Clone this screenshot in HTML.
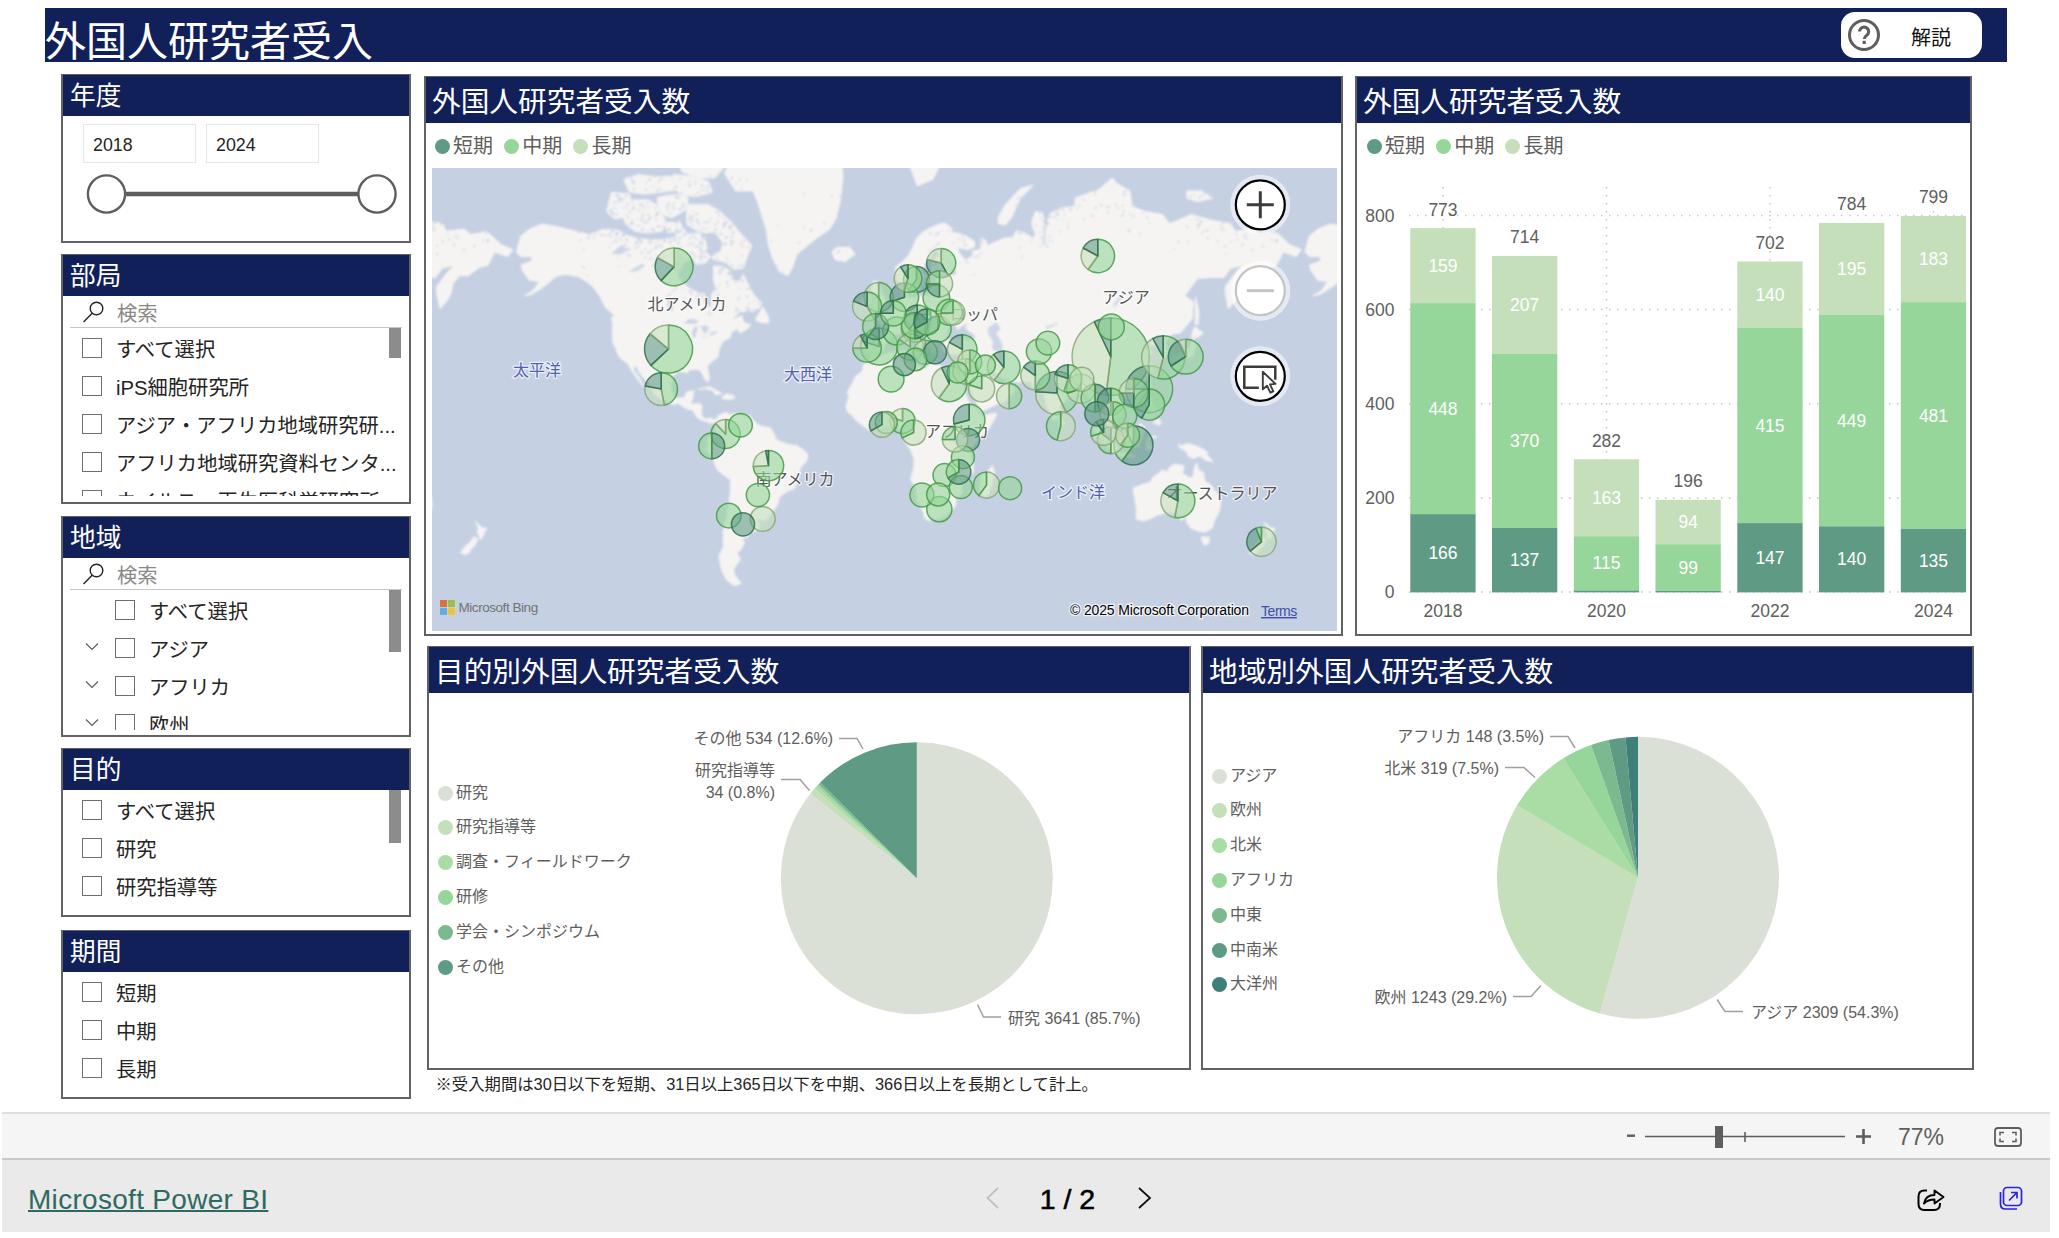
<!DOCTYPE html><html lang="ja"><head><meta charset="utf-8"><title>外国人研究者受入</title>
<style>
html,body{margin:0;padding:0;background:#fff}
body{width:2059px;height:1238px;position:relative;overflow:hidden;font-family:"Liberation Sans","Noto Sans CJK JP",sans-serif;color:#252423}
.abs{position:absolute}
.panel{position:absolute;box-sizing:border-box;border:1px solid #626262;background:#fff;box-shadow:inset 0 0 0 1px #626262}
.hd{position:absolute;left:1px;right:1px;top:0;background:#12205a;color:#fff;white-space:nowrap;overflow:hidden}
.hd span{position:absolute;left:9px}
.cb{position:absolute;width:20px;height:20px;margin-left:-1px;box-sizing:border-box;border:1px solid #6e6e6e;background:#fff}
.it{position:absolute;font-size:20.3px;line-height:28px;white-space:nowrap;color:#252423}
.lg{position:absolute;white-space:nowrap;color:#605e5c}
.dot{position:absolute;border-radius:50%}
svg text{font-family:"Liberation Sans","Noto Sans CJK JP",sans-serif}
</style></head><body>
<div class="abs" style="left:45px;top:8px;width:1962px;height:54px;background:#12205a"></div>
<div class="abs" style="left:45px;top:15px;font-size:41px;line-height:54px;color:#fff;white-space:nowrap">外国人研究者受入</div>
<div class="abs" style="left:1841px;top:12px;width:141px;height:46px;border-radius:14px;background:#fff"></div>
<svg class="abs" style="left:1847px;top:18px" width="34" height="34" viewBox="0 0 34 34"><circle cx="17" cy="17" r="14.5" fill="none" stroke="#605e5c" stroke-width="3"/><path d="M12.6 13.6a4.5 4.5 0 1 1 6.9 3.8c-1.6 1.1-2.3 1.8-2.3 3.6" fill="none" stroke="#605e5c" stroke-width="3"/><rect x="15.6" y="22.8" width="3.2" height="3.2" fill="#605e5c"/></svg>
<div class="abs" style="left:1911px;top:23.5px;font-size:20px;line-height:28px;color:#111;white-space:nowrap">解説</div>
<div class="panel" style="left:61px;top:74px;width:350px;height:169px">
<div class="hd" style="height:41px"><span style="font-size:25.7px;line-height:41px;top:1px;left:7px">年度</span></div>
<div class="abs" style="left:0;top:-1px;width:100%;height:100%"><div class="abs" style="left:21px;top:50px;width:113px;height:39px;box-sizing:border-box;border:1.5px solid #e6e6e6"></div><div class="abs" style="left:144px;top:50px;width:113px;height:39px;box-sizing:border-box;border:1.5px solid #e6e6e6"></div><div class="abs" style="left:31px;top:59px;font-size:17.8px;line-height:24px;color:#252423">2018</div><div class="abs" style="left:154px;top:59px;font-size:17.8px;line-height:24px;color:#252423">2024</div><svg class="abs" style="left:0;top:95px" width="348" height="50"><path d="M44 25H315" stroke="#605e5c" stroke-width="4.5"/><circle cx="44.5" cy="25" r="18.6" fill="#fff" stroke="#605e5c" stroke-width="2.4"/><circle cx="315" cy="25" r="18.6" fill="#fff" stroke="#605e5c" stroke-width="2.4"/></svg></div>
</div>
<div class="panel" style="left:61px;top:254px;width:350px;height:250px">
<div class="hd" style="height:41px"><span style="font-size:25.7px;line-height:41px;top:1px;left:7px">部局</span></div>
<div class="abs" style="left:0;top:-1px;width:100%;height:100%"><svg class="abs" style="left:20px;top:46px" width="24" height="24" viewBox="0 0 24 24"><circle cx="14.5" cy="8.5" r="6.3" fill="none" stroke="#252423" stroke-width="1.4"/><path d="M10.2 13.2L1.5 22" stroke="#252423" stroke-width="1.4" fill="none"/></svg><div class="abs" style="left:55px;top:45.5px;font-size:20.3px;line-height:28px;color:#8a8886;white-space:nowrap">検索</div><div class="abs" style="left:8px;top:73px;width:332px;height:1px;background:#c8c6c4"></div><div class="abs" style="left:0;top:73px;width:348px;height:169px;overflow:hidden"><div class="cb" style="left:21px;top:11px"></div><div class="it" style="left:54px;top:9.0px">すべて選択</div><div class="cb" style="left:21px;top:49px"></div><div class="it" style="left:54px;top:47.0px">iPS細胞研究所</div><div class="cb" style="left:21px;top:87px"></div><div class="it" style="left:54px;top:85.0px">アジア・アフリカ地域研究研...</div><div class="cb" style="left:21px;top:125px"></div><div class="it" style="left:54px;top:123.0px">アフリカ地域研究資料センタ...</div><div class="cb" style="left:21px;top:163px"></div><div class="it" style="left:54px;top:161.0px">ウイルス・再生医科学研究所</div></div><div class="abs" style="left:327px;top:74px;width:12px;height:30px;background:#8c8c8c"></div></div>
</div>
<div class="panel" style="left:61px;top:516px;width:350px;height:221px">
<div class="hd" style="height:41px"><span style="font-size:25.7px;line-height:41px;top:1px;left:7px">地域</span></div>
<div class="abs" style="left:0;top:-1px;width:100%;height:100%"><svg class="abs" style="left:20px;top:46px" width="24" height="24" viewBox="0 0 24 24"><circle cx="14.5" cy="8.5" r="6.3" fill="none" stroke="#252423" stroke-width="1.4"/><path d="M10.2 13.2L1.5 22" stroke="#252423" stroke-width="1.4" fill="none"/></svg><div class="abs" style="left:55px;top:45.5px;font-size:20.3px;line-height:28px;color:#8a8886;white-space:nowrap">検索</div><div class="abs" style="left:8px;top:73px;width:332px;height:1px;background:#c8c6c4"></div><div class="abs" style="left:0;top:73px;width:348px;height:141px;overflow:hidden"><div class="cb" style="left:54px;top:11px"></div><div class="it" style="left:87px;top:9.0px">すべて選択</div><div class="cb" style="left:54px;top:49px"></div><div class="it" style="left:87px;top:47.0px">アジア</div><svg class="abs" style="left:23px;top:53px" width="14" height="9" viewBox="0 0 14 9"><path d="M1 1.5L7 7.5L13 1.5" fill="none" stroke="#605e5c" stroke-width="1.2"/></svg><div class="cb" style="left:54px;top:87px"></div><div class="it" style="left:87px;top:85.0px">アフリカ</div><svg class="abs" style="left:23px;top:91px" width="14" height="9" viewBox="0 0 14 9"><path d="M1 1.5L7 7.5L13 1.5" fill="none" stroke="#605e5c" stroke-width="1.2"/></svg><div class="cb" style="left:54px;top:125px"></div><div class="it" style="left:87px;top:123.0px">欧州</div><svg class="abs" style="left:23px;top:129px" width="14" height="9" viewBox="0 0 14 9"><path d="M1 1.5L7 7.5L13 1.5" fill="none" stroke="#605e5c" stroke-width="1.2"/></svg></div><div class="abs" style="left:327px;top:74px;width:12px;height:62px;background:#8c8c8c"></div></div>
</div>
<div class="panel" style="left:61px;top:748px;width:350px;height:169px">
<div class="hd" style="height:41px"><span style="font-size:25.7px;line-height:41px;top:1px;left:7px">目的</span></div>
<div class="abs" style="left:0;top:-1px;width:100%;height:100%"><div class="cb" style="left:21px;top:52px"></div><div class="it" style="left:54px;top:50.0px">すべて選択</div><div class="cb" style="left:21px;top:90px"></div><div class="it" style="left:54px;top:88.0px">研究</div><div class="cb" style="left:21px;top:128px"></div><div class="it" style="left:54px;top:126.0px">研究指導等</div><div class="abs" style="left:327px;top:42px;width:12px;height:53px;background:#8c8c8c"></div></div>
</div>
<div class="panel" style="left:61px;top:930px;width:350px;height:169px">
<div class="hd" style="height:41px"><span style="font-size:25.7px;line-height:41px;top:1px;left:7px">期間</span></div>
<div class="abs" style="left:0;top:-1px;width:100%;height:100%"><div class="cb" style="left:21px;top:52px"></div><div class="it" style="left:54px;top:50.0px">短期</div><div class="cb" style="left:21px;top:90px"></div><div class="it" style="left:54px;top:88.0px">中期</div><div class="cb" style="left:21px;top:128px"></div><div class="it" style="left:54px;top:126.0px">長期</div></div>
</div>
<div class="panel" style="left:424px;top:76px;width:919px;height:560px">
<div class="hd" style="height:46px"><span style="font-size:28.7px;line-height:46px;top:2px;left:6px">外国人研究者受入数</span></div>
<div class="dot" style="left:9.5px;top:62px;width:15px;height:15px;background:#5f9b84"></div><div class="lg" style="left:28.0px;top:55px;font-size:20px;line-height:28px">短期</div><div class="dot" style="left:78.8px;top:62px;width:15px;height:15px;background:#96d69a"></div><div class="lg" style="left:97.3px;top:55px;font-size:20px;line-height:28px">中期</div><div class="dot" style="left:148.1px;top:62px;width:15px;height:15px;background:#c4dfba"></div><div class="lg" style="left:166.6px;top:55px;font-size:20px;line-height:28px">長期</div><svg class="abs" style="left:7px;top:91px" width="905" height="463" viewBox="0 0 905 463"><filter id="soft" x="-5%" y="-5%" width="110%" height="110%"><feGaussianBlur stdDeviation="0.9"/></filter><rect width="905" height="463" fill="#c5d0e3"/><g filter="url(#soft)"><rect x="-20" y="-20" width="945" height="503" fill="#c5d0e3"/><path d="M-355.7 183.7L-356.8 178.9L-355.3 170.9L-356.4 166.5L-353.5 164.4L-343.7 165.0L-339.3 165.3L-338.6 157.3L-341.5 153.1L-346.3 149.9L-339.3 148.5L-339.9 145.2L-335.6 145.9L-332.5 141.8L-328.3 139.3L-326.1 133.6L-320.7 131.8L-316.7 129.9L-318.0 120.8L-317.4 119.0L-313.0 116.4L-313.4 121.9L-314.8 126.2L-311.9 129.9L-305.3 129.9L-295.5 127.3L-292.6 128.4L-290.0 124.4L-290.0 119.0L-286.7 116.4L-283.4 118.3L-282.3 114.2L-284.5 110.7L-274.7 109.5L-270.3 107.6L-273.6 105.6L-281.2 106.8L-286.7 107.6L-289.3 103.6L-288.9 95.2L-281.2 86.3L-283.4 82.6L-287.8 84.0L-290.0 90.8L-296.6 97.3L-298.8 103.6L-295.5 107.6L-299.9 119.0L-301.0 121.9L-304.7 124.4L-308.0 124.4L-311.5 113.4L-313.0 109.5L-318.5 115.3L-324.0 112.3L-325.0 103.6L-325.0 99.4L-317.4 93.0L-311.9 87.2L-307.5 79.2L-304.2 70.7L-297.7 63.9L-290.0 60.0L-279.7 55.5L-274.7 55.5L-268.1 61.1L-270.3 63.9L-263.7 65.0L-257.1 66.6L-246.2 73.3L-246.2 79.2L-252.8 81.6L-263.7 79.2L-260.4 86.3L-255.0 91.7L-248.4 88.6L-247.3 82.6L-239.6 81.6L-239.6 70.2L-235.2 71.8L-233.1 77.8L-217.7 70.7L-206.8 69.2L-204.6 62.8L-195.8 65.0L-187.1 70.2L-184.9 66.6L-189.3 55.5L-184.9 43.5L-178.3 44.7L-176.1 52.6L-177.2 69.2L-173.9 76.8L-175.0 66.6L-171.7 46.6L-160.8 40.3L-145.4 38.3L-145.4 30.2L-121.4 21.5L-108.2 9.9L-103.8 15.4L-90.7 23.0L-88.5 38.3L-75.4 43.5L-57.8 46.6L-51.3 55.5L-42.5 52.6L-29.4 46.6L-7.5 52.6L10.1 55.5L14.4 63.3L32.0 61.1L38.5 66.6L53.9 63.9L58.2 66.6L69.2 76.8L80.8 81.6L75.8 88.6L62.6 84.0L60.4 88.6L56.1 97.3L47.3 99.4L36.3 107.6L27.6 107.6L21.0 115.3L18.8 126.2L14.4 133.6L7.9 140.7L5.0 126.2L4.6 119.0L14.4 105.6L22.1 97.3L10.1 100.3L3.5 109.5L-7.5 109.5L-22.8 110.3L-35.9 128.0L-27.2 133.6L-28.3 150.8L-40.3 165.0L-46.9 165.9L-51.3 168.0L-55.6 175.3L-52.4 183.7L-53.5 188.5L-58.9 190.4L-58.9 183.7L-62.2 180.9L-62.2 176.7L-69.9 178.1L-68.8 173.8L-75.4 178.1L-77.5 180.9L-71.0 182.3L-67.7 183.7L-74.3 189.1L-71.0 197.0L-68.8 202.1L-71.0 207.1L-75.4 213.2L-81.9 219.2L-88.5 221.6L-94.0 223.9L-99.5 222.8L-103.8 228.6L-98.4 235.5L-96.6 243.4L-101.6 247.9L-106.0 251.9L-106.0 249.0L-110.4 246.8L-114.8 242.3L-117.0 241.2L-118.1 249.0L-114.8 255.6L-110.4 260.0L-109.3 267.7L-113.7 265.1L-116.3 257.8L-120.7 253.4L-119.8 244.5L-122.4 235.5L-127.9 235.5L-130.1 229.8L-134.5 223.9L-136.7 220.4L-142.2 222.1L-145.4 223.9L-149.8 227.4L-156.4 234.4L-160.8 236.6L-160.8 242.3L-161.2 248.3L-166.3 253.4L-169.5 247.9L-173.9 237.8L-176.1 228.6L-176.8 223.9L-181.6 224.4L-184.9 221.1L-188.2 216.8L-190.3 213.7L-201.3 213.9L-210.5 213.0L-212.2 209.5L-217.7 210.3L-224.3 205.8L-229.3 201.3L-230.9 203.3L-226.5 210.3L-223.2 212.5L-223.2 216.1L-217.7 216.3L-212.9 211.5L-212.0 215.6L-205.0 220.4L-207.9 225.1L-215.5 233.2L-222.1 235.5L-237.4 242.7L-241.2 243.0L-242.5 237.8L-248.4 226.3L-251.7 218.0L-259.3 207.1L-259.6 203.3L-261.1 198.8L-259.3 194.4L-257.1 186.4L-257.1 184.5L-264.8 186.4L-269.2 185.6L-275.8 184.2L-278.4 179.5L-277.3 174.4L-272.5 172.4L-267.0 171.8L-259.3 169.5L-252.8 172.4L-245.1 170.9L-246.2 166.5L-253.9 161.3L-255.0 158.8L-250.6 153.4L-259.3 158.2L-262.6 161.9L-264.8 157.9L-269.2 155.7L-273.1 161.9L-274.7 169.5L-272.7 172.1L-278.0 173.2L-283.4 173.0L-285.6 175.3L-283.4 180.9L-285.6 185.0L-288.9 183.7L-293.3 173.8L-293.3 170.0L-301.0 165.0L-306.0 158.8L-309.1 159.5L-308.6 163.5L-305.3 168.0L-301.0 170.0L-295.5 174.7L-298.8 178.1L-299.9 180.9L-301.6 180.9L-301.0 176.7L-305.3 172.4L-309.1 170.3L-313.0 166.5L-316.3 162.5L-321.8 165.9L-329.0 165.9L-329.0 169.7L-334.9 173.8L-336.7 178.1L-337.1 181.5L-340.4 184.5L-347.0 185.8L-349.8 184.2L-352.4 183.4Z M-87.4 320.4L-85.9 330.0L-84.1 339.9L-84.1 351.1L-77.5 352.9L-68.8 350.3L-64.4 347.6L-53.5 344.3L-48.0 343.8L-42.5 346.9L-39.2 352.9L-34.2 347.6L-33.7 354.5L-29.4 360.5L-21.7 363.3L-15.1 363.9L-7.9 359.7L-6.4 352.9L-2.0 345.0L0.2 336.2L-0.9 328.8L-5.7 322.8L-9.6 316.9L-15.6 313.4L-17.3 304.2L-21.7 302.4L-23.9 294.8L-26.1 299.7L-27.2 308.8L-30.5 309.9L-38.1 305.4L-36.4 297.9L-45.8 295.9L-51.3 299.7L-53.5 304.2L-57.8 302.0L-62.2 305.4L-68.1 309.9L-69.9 314.1L-79.7 317.1Z M43.4 353.7L46.4 356.4L49.5 359.7L54.7 360.3L52.1 364.7L49.5 371.1L46.9 370.5L47.3 366.7L44.9 364.7L46.6 360.5Z M42.3 368.2L45.8 371.7L42.5 377.9L38.5 381.6L37.4 384.7L33.1 386.6L28.7 384.7L33.1 378.5L38.5 374.0Z M84.5 84.0L88.9 68.1L97.7 61.1L109.7 56.1L124.0 58.4L143.7 63.3L156.8 66.6L172.1 61.1L185.3 62.2L200.6 69.2L215.9 71.8L229.1 71.8L242.2 69.2L246.6 52.6L255.4 66.6L266.3 63.9L272.9 69.2L275.1 81.6L264.1 81.6L261.9 88.6L251.0 95.2L245.5 107.6L248.8 113.4L255.4 119.0L266.3 125.1L272.9 126.2L272.9 135.4L277.3 139.7L279.5 135.4L279.5 126.2L283.8 120.8L281.7 112.3L281.7 98.2L290.4 98.2L299.2 103.6L300.3 112.3L307.9 113.4L311.2 106.4L316.7 117.2L321.1 126.2L329.8 135.4L327.7 139.7L321.1 143.5L307.9 143.5L299.2 152.5L310.1 147.5L311.2 154.1L318.9 157.3L314.5 161.3L307.9 165.0L305.8 160.4L299.2 164.4L298.1 169.5L290.4 173.8L287.1 180.9L286.0 189.1L281.7 191.7L275.1 198.2L277.3 209.5L276.2 213.9L273.3 212.0L271.1 207.1L268.5 202.1L264.1 201.3L257.6 201.6L255.4 204.6L246.6 203.3L240.0 208.3L238.5 220.4L242.2 228.6L245.5 230.4L253.2 229.3L254.3 223.9L261.9 222.8L260.4 230.9L258.0 235.9L268.5 235.9L270.0 238.0L269.2 246.8L272.9 251.2L278.4 250.1L283.2 252.3L282.8 254.5L277.3 255.0L275.1 253.4L270.7 252.8L264.8 249.0L260.9 242.3L253.2 240.0L246.6 235.5L241.1 236.2L233.5 233.2L224.7 228.6L221.4 223.9L219.2 218.0L213.8 212.0L207.2 204.6L205.0 198.8L201.3 198.2L201.7 202.1L206.1 208.3L210.5 215.6L212.2 219.2L207.2 213.2L202.8 207.1L199.5 202.1L196.2 195.7L188.6 190.4L185.3 185.0L184.2 180.9L180.9 174.4L180.5 166.5L180.9 156.6L179.4 149.5L183.1 147.5L178.7 144.2L173.2 139.0L167.8 128.0L161.2 119.0L154.6 113.4L145.9 108.4L134.9 106.4L126.1 107.6L120.7 110.7L116.3 115.3L108.6 120.8L99.9 126.2L92.2 128.0L101.0 122.6L107.5 113.4L97.7 112.6L91.1 103.6L88.9 97.3L99.9 93.0L99.9 88.6L88.9 88.6Z M292.6 4.9L303.6 23.0L321.1 23.0L325.5 33.6L334.2 61.1L336.4 76.8L340.8 90.8L347.4 103.6L356.1 107.6L360.5 99.4L364.9 86.3L382.4 71.8L397.7 61.1L404.3 49.6L408.7 30.2L410.9 7.4L408.7 -10.4L386.8 -42.8L353.9 -36.8L321.1 -31.1L303.6 -15.3Z M256.5 38.3L275.1 38.3L286.0 44.1L297.0 54.3L305.8 65.0L317.8 77.8L313.4 88.6L310.1 98.6L302.5 99.4L294.8 93.0L281.7 89.5L290.4 84.0L292.6 74.3L283.8 62.2L274.0 63.3L266.3 61.1L256.5 55.5Z M193.0 37.7L202.8 33.6L215.9 33.6L222.5 37.7L231.3 52.0L229.1 61.7L215.9 63.3L203.9 61.7L195.1 54.9L192.3 46.0Z M176.5 42.8L180.9 25.9L196.2 27.4L198.4 36.3L194.0 47.2L183.1 49.0Z M244.4 -26.7L251.0 2.3L266.3 8.2L281.7 8.2L294.8 -6.6L316.7 -44.0L299.2 -59.9L259.8 -44.0Z M242.2 8.2L257.6 9.9L275.1 14.7L278.4 23.0L264.1 26.7L251.0 25.9L242.2 18.5Z M194.0 12.3L207.2 8.2L222.5 10.7L237.9 9.9L241.1 20.8L224.7 23.0L211.6 24.5L198.4 22.3Z M226.9 30.9L233.5 29.5L244.4 28.1L254.3 30.9L253.2 39.6L246.6 44.1L240.0 47.8L233.5 46.0L228.0 40.9Z M261.9 82.6L268.5 81.6L276.2 88.6L272.9 93.0L265.2 94.3L261.9 89.5Z M323.3 151.8L330.9 139.0L336.4 149.2L336.4 155.0L329.8 154.7Z M266.3 221.6L277.3 218.7L288.2 224.6L290.0 225.8L282.8 226.5L281.7 222.8L272.9 220.4Z M289.3 229.8L293.7 226.3L301.4 227.4L302.5 230.2L295.9 231.6Z M399.9 84.0L404.3 79.7L417.5 79.2L422.9 86.3L413.1 93.5L403.2 91.7Z M283.2 252.3L287.1 247.2L294.8 244.1L295.9 246.8L303.6 245.6L312.3 247.9L317.8 247.4L321.1 252.3L327.7 257.8L338.6 260.0L343.0 267.7L343.0 271.0L347.4 273.2L356.1 276.5L364.9 277.6L371.5 282.0L375.8 286.4L374.7 293.0L368.2 299.7L367.1 308.8L362.7 320.4L356.1 322.8L347.4 328.8L345.8 336.2L338.6 346.3L334.2 352.1L327.7 351.6L324.4 350.3L327.7 357.0L325.5 362.5L316.7 363.9L315.6 369.6L310.1 369.6L312.3 374.9L309.0 381.6L304.7 384.7L308.4 391.2L301.4 401.3L302.5 406.6L309.0 415.1L302.5 417.8L294.8 412.1L289.3 401.3L287.1 387.9L291.5 378.5L291.1 363.9L292.6 357.0L295.9 345.0L297.0 334.9L298.5 322.8L298.5 311.8L292.6 307.6L285.4 302.0L281.7 293.0L277.3 285.3L274.4 280.9L277.3 277.6L275.1 273.2L277.3 269.2L279.9 267.7L283.2 262.2L282.8 255.6Z M439.4 186.9L448.1 188.5L459.1 184.2L474.4 182.8L476.6 189.1L474.4 191.7L476.6 193.8L485.4 196.2L494.1 201.3L496.3 195.7L507.3 197.7L516.0 199.5L523.2 199.0L527.4 198.8L523.7 202.1L525.9 207.1L530.3 216.8L533.5 223.9L534.2 229.1L539.0 236.6L546.7 243.4L547.3 245.6L550.0 248.1L564.2 245.0L564.2 247.9L556.5 261.1L548.9 268.8L543.4 275.4L537.9 282.0L539.0 288.6L541.2 294.1L541.2 304.2L529.2 315.7L530.3 325.2L523.7 330.0L523.7 337.4L518.2 343.8L509.4 350.3L496.3 352.4L492.6 350.3L491.9 345.0L485.4 332.5L484.3 321.6L478.8 311.1L482.1 298.6L482.1 290.8L478.8 282.0L472.2 273.2L473.3 266.6L473.3 262.2L467.8 261.6L462.4 257.2L454.7 258.3L445.9 260.0L436.1 261.6L430.6 257.2L424.0 252.3L419.6 246.8L415.3 243.4L414.2 238.4L416.8 228.6L415.3 223.9L419.6 216.8L424.0 207.8L430.6 203.3L431.3 197.0L438.3 191.7Z M560.5 297.5L562.7 305.4L556.5 326.4L551.1 328.8L547.8 321.6L549.5 307.6L555.4 304.2Z M432.8 183.7L431.7 178.9L433.2 170.9L432.1 166.5L435.0 164.4L444.8 165.0L449.2 165.3L449.9 157.3L447.0 153.1L442.2 149.9L449.2 148.5L448.6 145.2L452.9 145.9L456.0 141.8L460.2 139.3L462.4 133.6L467.8 131.8L471.8 129.9L470.5 120.8L471.1 119.0L475.5 116.4L475.1 121.9L473.7 126.2L476.6 129.9L483.2 129.9L493.0 127.3L495.9 128.4L498.5 124.4L498.5 119.0L501.8 116.4L505.1 118.3L506.2 114.2L504.0 110.7L513.8 109.5L518.2 107.6L514.9 105.6L507.3 106.8L501.8 107.6L499.2 103.6L499.6 95.2L507.3 86.3L505.1 82.6L500.7 84.0L498.5 90.8L491.9 97.3L489.7 103.6L493.0 107.6L488.6 119.0L487.5 121.9L483.8 124.4L480.5 124.4L477.0 113.4L475.5 109.5L470.0 115.3L464.5 112.3L463.5 103.6L463.5 99.4L471.1 93.0L476.6 87.2L481.0 79.2L484.3 70.7L490.8 63.9L498.5 60.0L508.8 55.5L513.8 55.5L520.4 61.1L518.2 63.9L524.8 65.0L531.4 66.6L542.3 73.3L542.3 79.2L535.7 81.6L524.8 79.2L528.1 86.3L533.5 91.7L540.1 88.6L541.2 82.6L548.9 81.6L548.9 70.2L553.3 71.8L555.4 77.8L570.8 70.7L581.7 69.2L583.9 62.8L592.7 65.0L601.4 70.2L603.6 66.6L599.2 55.5L603.6 43.5L610.2 44.7L612.4 52.6L611.3 69.2L614.6 76.8L613.5 66.6L616.8 46.6L627.7 40.3L643.1 38.3L643.1 30.2L667.1 21.5L680.3 9.9L684.7 15.4L697.8 23.0L700.0 38.3L713.1 43.5L730.7 46.6L737.2 55.5L746.0 52.6L759.1 46.6L781.0 52.6L798.6 55.5L802.9 63.3L820.5 61.1L827.0 66.6L842.4 63.9L846.8 66.6L857.7 76.8L869.3 81.6L864.3 88.6L851.1 84.0L848.9 88.6L844.6 97.3L835.8 99.4L824.8 107.6L816.1 107.6L809.5 115.3L807.3 126.2L802.9 133.6L796.4 140.7L793.5 126.2L793.1 119.0L802.9 105.6L810.6 97.3L798.6 100.3L792.0 109.5L781.0 109.5L765.7 110.3L752.6 128.0L761.3 133.6L760.2 150.8L748.2 165.0L741.6 165.9L737.2 168.0L732.9 175.3L736.1 183.7L735.0 188.5L729.6 190.4L729.6 183.7L726.3 180.9L726.3 176.7L718.6 178.1L719.7 173.8L713.1 178.1L711.0 180.9L717.5 182.3L720.8 183.7L714.2 189.1L717.5 197.0L719.7 202.1L717.5 207.1L713.1 213.2L706.6 219.2L700.0 221.6L694.5 223.9L689.0 222.8L684.7 228.6L690.1 235.5L691.9 243.4L686.9 247.9L682.5 251.9L682.5 249.0L678.1 246.8L673.7 242.3L671.5 241.2L670.4 249.0L673.7 255.6L678.1 260.0L679.2 267.7L674.8 265.1L672.2 257.8L667.8 253.4L668.7 244.5L666.1 235.5L660.6 235.5L658.4 229.8L654.0 223.9L651.8 220.4L646.3 222.1L643.1 223.9L638.7 227.4L632.1 234.4L627.7 236.6L627.7 242.3L627.3 248.3L622.2 253.4L619.0 247.9L614.6 237.8L612.4 228.6L611.7 223.9L606.9 224.4L603.6 221.1L600.3 216.8L598.2 213.7L587.2 213.9L578.0 213.0L576.3 209.5L570.8 210.3L564.2 205.8L559.2 201.3L557.6 203.3L562.0 210.3L565.3 212.5L565.3 216.1L570.8 216.3L575.6 211.5L576.5 215.6L583.5 220.4L580.6 225.1L573.0 233.2L566.4 235.5L551.1 242.7L547.3 243.0L546.0 237.8L540.1 226.3L536.8 218.0L529.2 207.1L528.9 203.3L527.4 198.8L529.2 194.4L531.4 186.4L531.4 184.5L523.7 186.4L519.3 185.6L512.7 184.2L510.1 179.5L511.2 174.4L516.0 172.4L521.5 171.8L529.2 169.5L535.7 172.4L543.4 170.9L542.3 166.5L534.6 161.3L533.5 158.8L537.9 153.4L529.2 158.2L525.9 161.9L523.7 157.9L519.3 155.7L515.4 161.9L513.8 169.5L515.8 172.1L510.5 173.2L505.1 173.0L502.9 175.3L505.1 180.9L502.9 185.0L499.6 183.7L495.2 173.8L495.2 170.0L487.5 165.0L482.5 158.8L479.4 159.5L479.9 163.5L483.2 168.0L487.5 170.0L493.0 174.7L489.7 178.1L488.6 180.9L486.9 180.9L487.5 176.7L483.2 172.4L479.4 170.3L475.5 166.5L472.2 162.5L466.7 165.9L459.5 165.9L459.5 169.7L453.6 173.8L451.8 178.1L451.4 181.5L448.1 184.5L441.5 185.8L438.7 184.2L436.1 183.4Z M440.5 144.2L445.9 142.5L455.3 140.0L456.2 134.7L453.2 133.6L452.1 128.0L449.2 124.4L448.1 117.2L444.8 113.0L441.5 113.4L439.4 120.8L441.5 126.2L445.9 126.9L445.9 132.5L442.6 132.5L443.1 137.2L441.1 138.3L445.9 139.0Z M430.6 138.3L438.7 136.5L439.8 128.0L436.1 125.1L430.6 129.9Z M476.6 -5.7L487.5 -10.4L511.6 -10.4L500.7 11.5L485.4 17.8Z M566.4 55.5L573.0 57.2L579.5 49.6L588.3 30.2L601.4 17.0L588.3 20.8L573.0 37.0L566.4 49.6Z M754.8 23.0L770.1 23.0L781.0 30.2L765.7 33.6L754.8 30.2Z M763.5 128.8L766.8 144.2L765.7 157.3L763.1 155.7L763.5 142.5Z M759.1 169.5L762.4 158.8L771.2 165.0L765.7 169.5Z M761.3 170.9L763.5 178.1L761.3 186.4L759.1 189.1L752.6 190.1L749.3 193.0L748.2 190.4L741.6 191.7L739.4 191.7L739.4 198.8L737.2 195.7L737.2 193.0L739.4 190.9L742.7 187.7L750.4 186.4L752.6 182.8L758.0 179.5L759.1 175.3Z M717.5 214.4L719.7 214.4L717.5 221.6L715.3 219.2Z M690.6 227.4L694.5 226.3L695.6 227.4L692.3 230.4Z M716.4 229.8L719.7 229.8L719.7 235.5L724.1 242.3L717.5 240.0L715.3 235.5Z M720.8 255.2L726.9 250.5L728.9 255.6L726.9 257.4L724.1 255.2Z M691.2 267.7L696.7 265.5L700.0 261.1L708.8 255.6L713.1 260.0L711.0 266.6L709.9 269.9L706.6 278.7L702.2 278.7L695.6 277.6L693.4 274.3L691.2 271.0Z M661.2 258.9L667.1 262.2L679.2 273.2L684.7 277.6L684.2 283.7L680.3 283.1L672.6 275.4L668.2 268.8L661.7 261.1Z M684.7 285.5L690.1 285.7L695.6 286.1L702.8 287.9L702.8 289.2L689.0 287.7L684.7 286.4Z M714.9 269.9L717.5 268.8L725.2 268.4L721.9 270.1L717.1 271.0L718.6 275.4L721.5 280.4L718.8 280.4L716.6 282.4L714.9 282.0L714.0 277.6L714.9 273.2Z M747.1 275.8L749.3 278.2L754.8 275.4L761.3 276.9L770.1 280.6L775.6 284.2L774.5 285.9L781.0 293.5L774.5 292.6L767.9 287.9L761.3 290.4L755.9 288.1L755.9 284.8L750.4 281.1L747.1 279.3Z M627.7 249.7L631.7 254.5L629.9 257.8L627.7 257.2L627.3 253.4Z M701.1 320.4L702.6 330.0L704.4 339.9L704.4 351.1L711.0 352.9L719.7 350.3L724.1 347.6L735.0 344.3L740.5 343.8L746.0 346.9L749.3 352.9L754.3 347.6L754.8 354.5L759.1 360.5L766.8 363.3L773.4 363.9L780.6 359.7L782.1 352.9L786.5 345.0L788.7 336.2L787.6 328.8L782.8 322.8L778.9 316.9L772.9 313.4L771.2 304.2L766.8 302.4L764.6 294.8L762.4 299.7L761.3 308.8L758.0 309.9L750.4 305.4L752.1 297.9L742.7 295.9L737.2 299.7L735.0 304.2L730.7 302.0L726.3 305.4L720.4 309.9L718.6 314.1L708.8 317.1Z M769.4 368.8L777.3 369.3L776.7 375.5L772.3 377.3L770.1 372.5Z M831.9 353.7L834.9 356.4L838.0 359.7L843.2 360.3L840.6 364.7L838.0 371.1L835.4 370.5L835.8 366.7L833.4 364.7L835.1 360.5Z M830.8 368.2L834.3 371.7L831.0 377.9L827.0 381.6L825.9 384.7L821.6 386.6L817.2 384.7L821.6 378.5L827.0 374.0Z M234.6 56.1L242.2 56.1L243.3 61.7L236.8 62.8Z M873.0 84.0L877.4 68.1L886.2 61.1L898.2 56.1L912.5 58.4L932.2 63.3L945.3 66.6L960.6 61.1L973.8 62.2L989.1 69.2L1004.5 71.8L1017.6 71.8L1030.7 69.2L1035.1 52.6L1043.9 66.6L1054.8 63.9L1061.4 69.2L1063.6 81.6L1052.6 81.6L1050.4 88.6L1039.5 95.2L1034.0 107.6L1037.3 113.4L1043.9 119.0L1054.8 125.1L1061.4 126.2L1061.4 135.4L1065.8 139.7L1068.0 135.4L1068.0 126.2L1072.3 120.8L1070.2 112.3L1070.2 98.2L1078.9 98.2L1087.7 103.6L1088.8 112.3L1096.4 113.4L1099.7 106.4L1105.2 117.2L1109.6 126.2L1118.3 135.4L1116.2 139.7L1109.6 143.5L1096.4 143.5L1087.7 152.5L1098.6 147.5L1099.7 154.1L1107.4 157.3L1103.0 161.3L1096.4 165.0L1094.3 160.4L1087.7 164.4L1086.6 169.5L1078.9 173.8L1075.6 180.9L1074.5 189.1L1070.2 191.7L1063.6 198.2L1065.8 209.5L1064.7 213.9L1061.8 212.0L1059.6 207.1L1057.0 202.1L1052.6 201.3L1046.1 201.6L1043.9 204.6L1035.1 203.3L1028.5 208.3L1027.0 220.4L1030.7 228.6L1034.0 230.4L1041.7 229.3L1042.8 223.9L1050.4 222.8L1048.9 230.9L1046.5 235.9L1057.0 235.9L1058.5 238.0L1057.7 246.8L1061.4 251.2L1066.9 250.1L1071.7 252.3L1071.3 254.5L1065.8 255.0L1063.6 253.4L1059.2 252.8L1053.3 249.0L1049.4 242.3L1041.7 240.0L1035.1 235.5L1029.6 236.2L1022.0 233.2L1013.2 228.6L1009.9 223.9L1007.7 218.0L1002.3 212.0L995.7 204.6L993.5 198.8L989.8 198.2L990.2 202.1L994.6 208.3L999.0 215.6L1000.7 219.2L995.7 213.2L991.3 207.1L988.0 202.1L984.7 195.7L977.1 190.4L973.8 185.0L972.7 180.9L969.4 174.4L969.0 166.5L969.4 156.6L967.9 149.5L971.6 147.5L967.2 144.2L961.7 139.0L956.3 128.0L949.7 119.0L943.1 113.4L934.4 108.4L923.4 106.4L914.6 107.6L909.2 110.7L904.8 115.3L897.1 120.8L888.4 126.2L880.7 128.0L889.5 122.6L896.0 113.4L886.2 112.6L879.6 103.6L877.4 97.3L888.4 93.0L888.4 88.6L877.4 88.6Z" fill="#f5f4f2" stroke="#f5f4f2" stroke-width="1" stroke-linejoin="round"/><path d="M176.5 42.8L180.9 25.9L196.2 27.4L198.4 36.3L194.0 47.2L183.1 49.0Z M193.0 37.7L202.8 33.6L215.9 33.6L222.5 37.7L231.3 52.0L229.1 61.7L215.9 63.3L203.9 61.7L195.1 54.9L192.3 46.0Z M226.9 30.9L233.5 29.5L244.4 28.1L254.3 30.9L253.2 39.6L246.6 44.1L240.0 47.8L233.5 46.0L228.0 40.9Z M234.6 56.1L242.2 56.1L243.3 61.7L236.8 62.8Z M194.0 12.3L207.2 8.2L222.5 10.7L237.9 9.9L241.1 20.8L224.7 23.0L211.6 24.5L198.4 22.3Z M242.2 8.2L257.6 9.9L275.1 14.7L278.4 23.0L264.1 26.7L251.0 25.9L242.2 18.5Z M244.4 -26.7L251.0 2.3L266.3 8.2L281.7 8.2L294.8 -6.6L316.7 -44.0L299.2 -59.9L259.8 -44.0Z M256.5 38.3L275.1 38.3L286.0 44.1L297.0 54.3L305.8 65.0L317.8 77.8L313.4 88.6L310.1 98.6L302.5 99.4L294.8 93.0L281.7 89.5L290.4 84.0L292.6 74.3L283.8 62.2L274.0 63.3L266.3 61.1L256.5 55.5Z M261.9 82.6L268.5 81.6L276.2 88.6L272.9 93.0L265.2 94.3L261.9 89.5Z" fill="#f5f4f2" stroke="#f5f4f2" stroke-width="4.5" stroke-linejoin="round" fill-opacity="1" stroke-opacity="0.9"/><path d="M555.4 160.4L564.2 154.1L568.6 160.4L564.2 165.0L568.6 172.4L570.8 178.1L569.7 183.7L562.0 182.8L559.8 179.5L560.9 173.8L556.5 166.5Z M251.0 155.0L257.6 150.8L264.1 151.5L267.0 154.7L261.9 155.7L255.4 155.4Z M260.2 169.5L263.5 169.5L265.9 158.8L263.0 157.9L260.2 163.5Z M267.4 157.9L275.1 157.6L277.3 161.0L273.6 165.9L270.7 163.5L269.6 160.4Z M270.0 170.0L279.5 167.1L285.4 165.0L284.9 163.5L278.4 164.1L277.3 167.7L270.7 168.6Z M235.7 142.5L241.1 142.5L240.0 131.8L235.7 130.7Z M196.2 103.6L209.4 96.1L213.8 97.3L205.0 103.6Z M178.7 86.3L189.7 76.8L195.1 81.6L189.7 86.3Z M680.3 139.0L684.7 137.2L693.4 123.7L691.2 123.3L683.6 133.6Z M518.2 107.6L523.7 106.8L524.8 102.8L519.3 101.1Z M521.9 271.7L527.0 270.6L527.0 276.0L522.6 276.9Z M613.5 158.8L625.5 154.7L625.5 156.6L614.6 161.0Z" fill="#c5d0e3" fill-opacity="0.85"/><g fill="#c5d0e3" fill-opacity="0.8"><ellipse cx="182.6" cy="63.1" rx="0.9" ry="1.0" transform="rotate(-56 182.6 63.1)"/><ellipse cx="184.6" cy="74.2" rx="1.4" ry="0.6" transform="rotate(12 184.6 74.2)"/><ellipse cx="229.5" cy="10.9" rx="1.7" ry="0.8" transform="rotate(-42 229.5 10.9)"/><ellipse cx="250.3" cy="59.6" rx="1.6" ry="0.7" transform="rotate(13 250.3 59.6)"/><ellipse cx="264.5" cy="78.2" rx="0.9" ry="0.6" transform="rotate(-34 264.5 78.2)"/><ellipse cx="243.9" cy="63.5" rx="1.3" ry="1.3" transform="rotate(-14 243.9 63.5)"/><ellipse cx="215.5" cy="35.0" rx="1.1" ry="1.0" transform="rotate(7 215.5 35.0)"/><ellipse cx="246.1" cy="95.3" rx="1.8" ry="0.9" transform="rotate(25 246.1 95.3)"/><ellipse cx="287.3" cy="102.6" rx="1.1" ry="1.1" transform="rotate(-52 287.3 102.6)"/><ellipse cx="180.9" cy="45.8" rx="1.9" ry="1.2" transform="rotate(-24 180.9 45.8)"/><ellipse cx="275.7" cy="23.3" rx="1.8" ry="0.9" transform="rotate(18 275.7 23.3)"/><ellipse cx="237.1" cy="61.7" rx="1.7" ry="1.2" transform="rotate(-25 237.1 61.7)"/><ellipse cx="270.8" cy="77.5" rx="0.9" ry="0.7" transform="rotate(24 270.8 77.5)"/><ellipse cx="257.3" cy="87.5" rx="1.3" ry="0.9" transform="rotate(12 257.3 87.5)"/><ellipse cx="270.5" cy="60.8" rx="1.2" ry="1.0" transform="rotate(-9 270.5 60.8)"/><ellipse cx="195.6" cy="81.0" rx="0.8" ry="0.7" transform="rotate(-48 195.6 81.0)"/><ellipse cx="263.9" cy="13.9" rx="1.3" ry="0.7" transform="rotate(2 263.9 13.9)"/><ellipse cx="242.1" cy="101.3" rx="1.2" ry="0.8" transform="rotate(46 242.1 101.3)"/><ellipse cx="201.8" cy="14.4" rx="1.6" ry="1.3" transform="rotate(37 201.8 14.4)"/><ellipse cx="248.5" cy="10.6" rx="1.6" ry="0.8" transform="rotate(-14 248.5 10.6)"/><ellipse cx="200.1" cy="56.1" rx="1.7" ry="1.1" transform="rotate(-16 200.1 56.1)"/><ellipse cx="310.2" cy="78.9" rx="1.0" ry="0.7" transform="rotate(-34 310.2 78.9)"/><ellipse cx="260.6" cy="57.1" rx="1.8" ry="0.7" transform="rotate(10 260.6 57.1)"/><ellipse cx="266.1" cy="64.0" rx="1.3" ry="1.2" transform="rotate(45 266.1 64.0)"/><ellipse cx="298.5" cy="105.6" rx="1.4" ry="1.2" transform="rotate(-19 298.5 105.6)"/><ellipse cx="209.6" cy="74.1" rx="1.8" ry="0.9" transform="rotate(-2 209.6 74.1)"/><ellipse cx="288.9" cy="65.8" rx="1.4" ry="1.2" transform="rotate(58 288.9 65.8)"/><ellipse cx="189.7" cy="72.0" rx="1.1" ry="0.7" transform="rotate(25 189.7 72.0)"/><ellipse cx="225.1" cy="88.3" rx="1.3" ry="1.1" transform="rotate(-48 225.1 88.3)"/><ellipse cx="195.5" cy="72.9" rx="1.2" ry="0.7" transform="rotate(-20 195.5 72.9)"/><ellipse cx="238.4" cy="45.6" rx="1.4" ry="0.8" transform="rotate(-52 238.4 45.6)"/><ellipse cx="308.9" cy="75.3" rx="1.4" ry="1.0" transform="rotate(-19 308.9 75.3)"/><ellipse cx="184.3" cy="27.3" rx="1.7" ry="0.9" transform="rotate(-17 184.3 27.3)"/><ellipse cx="307.8" cy="11.9" rx="1.0" ry="1.3" transform="rotate(20 307.8 11.9)"/><ellipse cx="216.2" cy="39.2" rx="1.4" ry="0.7" transform="rotate(-16 216.2 39.2)"/><ellipse cx="207.7" cy="71.5" rx="1.5" ry="1.1" transform="rotate(9 207.7 71.5)"/><ellipse cx="292.8" cy="76.4" rx="1.6" ry="1.3" transform="rotate(-17 292.8 76.4)"/><ellipse cx="299.3" cy="73.0" rx="1.5" ry="0.9" transform="rotate(4 299.3 73.0)"/><ellipse cx="269.1" cy="85.9" rx="1.1" ry="0.9" transform="rotate(-40 269.1 85.9)"/><ellipse cx="208.0" cy="37.2" rx="1.7" ry="0.7" transform="rotate(15 208.0 37.2)"/><ellipse cx="205.8" cy="58.1" rx="1.6" ry="1.1" transform="rotate(31 205.8 58.1)"/><ellipse cx="213.2" cy="54.7" rx="1.7" ry="1.1" transform="rotate(5 213.2 54.7)"/><ellipse cx="245.1" cy="30.0" rx="1.7" ry="1.0" transform="rotate(54 245.1 30.0)"/><ellipse cx="310.9" cy="77.9" rx="0.9" ry="0.6" transform="rotate(8 310.9 77.9)"/><ellipse cx="270.5" cy="67.6" rx="1.7" ry="1.1" transform="rotate(4 270.5 67.6)"/><ellipse cx="248.2" cy="40.8" rx="1.7" ry="1.2" transform="rotate(-30 248.2 40.8)"/><ellipse cx="261.3" cy="52.2" rx="1.0" ry="0.8" transform="rotate(35 261.3 52.2)"/><ellipse cx="272.3" cy="54.5" rx="1.3" ry="1.0" transform="rotate(26 272.3 54.5)"/><ellipse cx="251.5" cy="83.5" rx="1.3" ry="0.8" transform="rotate(-51 251.5 83.5)"/><ellipse cx="309.9" cy="97.8" rx="1.4" ry="1.2" transform="rotate(30 309.9 97.8)"/><ellipse cx="298.8" cy="76.3" rx="1.8" ry="1.1" transform="rotate(-9 298.8 76.3)"/><ellipse cx="179.3" cy="42.3" rx="1.6" ry="1.1" transform="rotate(-24 179.3 42.3)"/><ellipse cx="278.9" cy="51.1" rx="1.1" ry="1.0" transform="rotate(25 278.9 51.1)"/><ellipse cx="202.2" cy="20.7" rx="1.0" ry="1.3" transform="rotate(37 202.2 20.7)"/><ellipse cx="185.3" cy="80.9" rx="1.1" ry="0.8" transform="rotate(12 185.3 80.9)"/><ellipse cx="224.2" cy="47.4" rx="1.7" ry="1.2" transform="rotate(-49 224.2 47.4)"/><ellipse cx="298.3" cy="106.0" rx="1.6" ry="1.3" transform="rotate(0 298.3 106.0)"/><ellipse cx="239.8" cy="71.3" rx="1.0" ry="0.7" transform="rotate(27 239.8 71.3)"/><ellipse cx="187.9" cy="31.2" rx="1.7" ry="1.3" transform="rotate(-50 187.9 31.2)"/><ellipse cx="285.2" cy="90.0" rx="1.5" ry="0.8" transform="rotate(-44 285.2 90.0)"/><ellipse cx="235.4" cy="38.6" rx="1.1" ry="1.3" transform="rotate(-36 235.4 38.6)"/><ellipse cx="299.9" cy="68.9" rx="1.1" ry="1.3" transform="rotate(30 299.9 68.9)"/><ellipse cx="205.1" cy="73.6" rx="1.3" ry="1.1" transform="rotate(31 205.1 73.6)"/><ellipse cx="200.8" cy="34.7" rx="1.4" ry="0.7" transform="rotate(-35 200.8 34.7)"/><ellipse cx="214.8" cy="14.4" rx="1.0" ry="0.8" transform="rotate(-7 214.8 14.4)"/><ellipse cx="258.1" cy="18.6" rx="0.8" ry="1.0" transform="rotate(-7 258.1 18.6)"/><ellipse cx="278.1" cy="7.8" rx="1.2" ry="0.7" transform="rotate(59 278.1 7.8)"/><ellipse cx="248.0" cy="69.6" rx="1.6" ry="1.2" transform="rotate(-18 248.0 69.6)"/><ellipse cx="236.1" cy="99.6" rx="0.9" ry="0.9" transform="rotate(53 236.1 99.6)"/><ellipse cx="179.3" cy="69.1" rx="1.8" ry="0.7" transform="rotate(-14 179.3 69.1)"/><ellipse cx="263.5" cy="88.7" rx="1.2" ry="0.9" transform="rotate(-1 263.5 88.7)"/><ellipse cx="261.3" cy="87.6" rx="1.1" ry="0.8" transform="rotate(-60 261.3 87.6)"/><ellipse cx="291.6" cy="99.7" rx="1.3" ry="1.2" transform="rotate(41 291.6 99.7)"/><ellipse cx="208.4" cy="73.1" rx="1.8" ry="0.7" transform="rotate(42 208.4 73.1)"/><ellipse cx="246.1" cy="76.5" rx="1.2" ry="1.1" transform="rotate(1 246.1 76.5)"/><ellipse cx="299.9" cy="9.2" rx="0.9" ry="0.7" transform="rotate(3 299.9 9.2)"/><ellipse cx="315.0" cy="11.5" rx="0.9" ry="0.9" transform="rotate(54 315.0 11.5)"/><ellipse cx="199.5" cy="11.4" rx="1.8" ry="0.9" transform="rotate(50 199.5 11.4)"/><ellipse cx="197.8" cy="56.3" rx="1.5" ry="0.6" transform="rotate(21 197.8 56.3)"/><ellipse cx="258.3" cy="54.6" rx="1.2" ry="0.7" transform="rotate(-34 258.3 54.6)"/><ellipse cx="268.7" cy="74.2" rx="1.6" ry="1.2" transform="rotate(-7 268.7 74.2)"/><ellipse cx="316.2" cy="79.0" rx="1.6" ry="0.7" transform="rotate(-60 316.2 79.0)"/><ellipse cx="197.0" cy="80.4" rx="1.0" ry="0.6" transform="rotate(-11 197.0 80.4)"/><ellipse cx="228.2" cy="21.0" rx="1.7" ry="0.7" transform="rotate(40 228.2 21.0)"/><ellipse cx="296.0" cy="54.5" rx="1.0" ry="0.9" transform="rotate(12 296.0 54.5)"/><ellipse cx="203.7" cy="75.8" rx="1.2" ry="0.7" transform="rotate(-29 203.7 75.8)"/><ellipse cx="268.7" cy="82.4" rx="1.3" ry="1.2" transform="rotate(39 268.7 82.4)"/><ellipse cx="216.4" cy="74.0" rx="1.3" ry="1.1" transform="rotate(-3 216.4 74.0)"/><ellipse cx="244.9" cy="94.2" rx="1.9" ry="0.9" transform="rotate(-3 244.9 94.2)"/><ellipse cx="246.1" cy="103.7" rx="1.2" ry="1.3" transform="rotate(-43 246.1 103.7)"/><ellipse cx="287.1" cy="47.5" rx="1.0" ry="1.2" transform="rotate(18 287.1 47.5)"/><ellipse cx="192.9" cy="66.3" rx="1.0" ry="0.8" transform="rotate(4 192.9 66.3)"/><ellipse cx="206.5" cy="78.2" rx="1.2" ry="1.1" transform="rotate(-25 206.5 78.2)"/><ellipse cx="270.4" cy="22.2" rx="1.7" ry="0.7" transform="rotate(7 270.4 22.2)"/><ellipse cx="225.8" cy="77.9" rx="1.0" ry="0.8" transform="rotate(-50 225.8 77.9)"/><ellipse cx="256.8" cy="49.9" rx="0.8" ry="0.6" transform="rotate(-41 256.8 49.9)"/><ellipse cx="214.2" cy="54.0" rx="1.2" ry="0.6" transform="rotate(2 214.2 54.0)"/><ellipse cx="205.0" cy="51.1" rx="0.8" ry="0.9" transform="rotate(-47 205.0 51.1)"/><ellipse cx="247.8" cy="63.3" rx="1.1" ry="0.7" transform="rotate(-14 247.8 63.3)"/><ellipse cx="262.3" cy="68.9" rx="1.8" ry="0.8" transform="rotate(-41 262.3 68.9)"/><ellipse cx="243.4" cy="95.3" rx="0.9" ry="0.6" transform="rotate(-37 243.4 95.3)"/><ellipse cx="173.9" cy="61.6" rx="1.0" ry="0.7" transform="rotate(17 173.9 61.6)"/><ellipse cx="265.1" cy="51.7" rx="1.5" ry="1.0" transform="rotate(-52 265.1 51.7)"/><ellipse cx="285.3" cy="44.2" rx="1.7" ry="1.1" transform="rotate(-1 285.3 44.2)"/><ellipse cx="209.9" cy="52.0" rx="1.8" ry="1.3" transform="rotate(60 209.9 52.0)"/><ellipse cx="210.6" cy="61.3" rx="1.7" ry="1.0" transform="rotate(-27 210.6 61.3)"/><ellipse cx="184.5" cy="65.8" rx="1.8" ry="1.2" transform="rotate(-35 184.5 65.8)"/><ellipse cx="254.6" cy="83.8" rx="1.5" ry="0.7" transform="rotate(56 254.6 83.8)"/><ellipse cx="201.0" cy="14.0" rx="1.5" ry="1.2" transform="rotate(36 201.0 14.0)"/><ellipse cx="304.3" cy="15.5" rx="1.0" ry="0.7" transform="rotate(-56 304.3 15.5)"/><ellipse cx="309.4" cy="20.0" rx="0.9" ry="1.1" transform="rotate(20 309.4 20.0)"/><ellipse cx="218.3" cy="73.6" rx="1.1" ry="0.8" transform="rotate(31 218.3 73.6)"/><ellipse cx="283.3" cy="56.4" rx="1.1" ry="1.1" transform="rotate(40 283.3 56.4)"/><ellipse cx="231.8" cy="72.5" rx="1.2" ry="1.1" transform="rotate(8 231.8 72.5)"/><ellipse cx="291.8" cy="59.2" rx="1.3" ry="1.0" transform="rotate(-24 291.8 59.2)"/><ellipse cx="172.8" cy="67.4" rx="1.7" ry="0.7" transform="rotate(3 172.8 67.4)"/><ellipse cx="257.8" cy="13.6" rx="1.4" ry="0.7" transform="rotate(44 257.8 13.6)"/><ellipse cx="285.9" cy="53.7" rx="1.2" ry="0.9" transform="rotate(53 285.9 53.7)"/><ellipse cx="265.5" cy="78.3" rx="1.3" ry="1.0" transform="rotate(-39 265.5 78.3)"/><ellipse cx="205.9" cy="70.2" rx="1.6" ry="1.1" transform="rotate(22 205.9 70.2)"/><ellipse cx="237.2" cy="61.3" rx="1.3" ry="1.1" transform="rotate(-28 237.2 61.3)"/><ellipse cx="195.4" cy="82.1" rx="1.9" ry="1.1" transform="rotate(-47 195.4 82.1)"/><ellipse cx="195.9" cy="50.6" rx="1.0" ry="0.7" transform="rotate(-22 195.9 50.6)"/><ellipse cx="200.5" cy="52.7" rx="1.0" ry="0.9" transform="rotate(-56 200.5 52.7)"/><ellipse cx="266.5" cy="24.5" rx="1.4" ry="0.8" transform="rotate(-37 266.5 24.5)"/><ellipse cx="264.9" cy="70.9" rx="1.5" ry="0.7" transform="rotate(-7 264.9 70.9)"/><ellipse cx="194.8" cy="28.2" rx="0.8" ry="1.2" transform="rotate(6 194.8 28.2)"/><ellipse cx="269.8" cy="17.4" rx="1.5" ry="1.2" transform="rotate(-11 269.8 17.4)"/><ellipse cx="260.9" cy="52.7" rx="1.2" ry="0.6" transform="rotate(-51 260.9 52.7)"/><ellipse cx="232.7" cy="73.9" rx="1.2" ry="0.8" transform="rotate(-32 232.7 73.9)"/><ellipse cx="182.1" cy="34.5" rx="1.5" ry="1.1" transform="rotate(44 182.1 34.5)"/><ellipse cx="190.2" cy="30.1" rx="1.7" ry="0.8" transform="rotate(-12 190.2 30.1)"/><ellipse cx="270.3" cy="68.3" rx="1.7" ry="0.9" transform="rotate(23 270.3 68.3)"/><ellipse cx="192.4" cy="30.4" rx="0.8" ry="0.6" transform="rotate(-51 192.4 30.4)"/><ellipse cx="267.0" cy="88.6" rx="1.0" ry="0.8" transform="rotate(39 267.0 88.6)"/><ellipse cx="237.5" cy="36.1" rx="1.2" ry="1.0" transform="rotate(18 237.5 36.1)"/><ellipse cx="299.7" cy="61.2" rx="1.1" ry="0.7" transform="rotate(3 299.7 61.2)"/><ellipse cx="273.4" cy="88.8" rx="1.5" ry="1.1" transform="rotate(-40 273.4 88.8)"/><ellipse cx="293.7" cy="69.6" rx="1.5" ry="1.2" transform="rotate(-13 293.7 69.6)"/><ellipse cx="224.2" cy="51.8" rx="0.9" ry="1.1" transform="rotate(-18 224.2 51.8)"/><ellipse cx="289.0" cy="100.7" rx="1.6" ry="0.7" transform="rotate(-33 289.0 100.7)"/><ellipse cx="276.0" cy="54.0" rx="1.7" ry="0.9" transform="rotate(0 276.0 54.0)"/><ellipse cx="213.2" cy="80.9" rx="0.9" ry="0.8" transform="rotate(-15 213.2 80.9)"/><ellipse cx="177.9" cy="43.4" rx="1.4" ry="0.6" transform="rotate(-22 177.9 43.4)"/><ellipse cx="240.8" cy="38.4" rx="1.4" ry="1.0" transform="rotate(-12 240.8 38.4)"/><ellipse cx="258.3" cy="48.1" rx="1.5" ry="0.9" transform="rotate(37 258.3 48.1)"/><ellipse cx="296.8" cy="93.8" rx="0.8" ry="1.0" transform="rotate(14 296.8 93.8)"/><ellipse cx="189.3" cy="33.1" rx="1.8" ry="0.9" transform="rotate(-59 189.3 33.1)"/><ellipse cx="283.4" cy="61.8" rx="1.3" ry="1.3" transform="rotate(20 283.4 61.8)"/><ellipse cx="207.2" cy="42.2" rx="0.9" ry="1.2" transform="rotate(31 207.2 42.2)"/><ellipse cx="252.7" cy="66.7" rx="1.8" ry="1.3" transform="rotate(-54 252.7 66.7)"/><ellipse cx="290.3" cy="101.8" rx="1.6" ry="0.7" transform="rotate(50 290.3 101.8)"/><ellipse cx="292.8" cy="55.7" rx="1.8" ry="1.1" transform="rotate(0 292.8 55.7)"/><ellipse cx="265.4" cy="53.6" rx="1.2" ry="1.2" transform="rotate(60 265.4 53.6)"/><ellipse cx="211.5" cy="39.7" rx="1.1" ry="1.1" transform="rotate(23 211.5 39.7)"/><ellipse cx="292.3" cy="56.5" rx="1.3" ry="1.2" transform="rotate(-12 292.3 56.5)"/><ellipse cx="206.0" cy="71.1" rx="1.2" ry="0.8" transform="rotate(-40 206.0 71.1)"/><ellipse cx="297.5" cy="59.5" rx="1.7" ry="1.2" transform="rotate(27 297.5 59.5)"/><ellipse cx="249.4" cy="62.7" rx="1.2" ry="1.2" transform="rotate(32 249.4 62.7)"/><ellipse cx="270.1" cy="69.8" rx="1.1" ry="1.1" transform="rotate(41 270.1 69.8)"/><ellipse cx="249.6" cy="79.7" rx="1.2" ry="1.0" transform="rotate(-27 249.6 79.7)"/><ellipse cx="300.1" cy="64.5" rx="1.4" ry="0.7" transform="rotate(-36 300.1 64.5)"/><ellipse cx="185.5" cy="33.6" rx="1.4" ry="0.9" transform="rotate(39 185.5 33.6)"/><ellipse cx="246.9" cy="96.6" rx="1.9" ry="0.9" transform="rotate(-47 246.9 96.6)"/><ellipse cx="184.0" cy="83.1" rx="1.1" ry="1.0" transform="rotate(-48 184.0 83.1)"/><ellipse cx="210.0" cy="36.8" rx="1.8" ry="1.2" transform="rotate(44 210.0 36.8)"/><ellipse cx="225.6" cy="45.3" rx="1.7" ry="1.3" transform="rotate(50 225.6 45.3)"/><ellipse cx="258.6" cy="76.0" rx="1.9" ry="0.8" transform="rotate(12 258.6 76.0)"/><ellipse cx="240.2" cy="78.3" rx="1.2" ry="0.9" transform="rotate(-4 240.2 78.3)"/><ellipse cx="300.6" cy="97.3" rx="0.9" ry="1.3" transform="rotate(47 300.6 97.3)"/><ellipse cx="218.8" cy="89.9" rx="1.2" ry="0.8" transform="rotate(34 218.8 89.9)"/><ellipse cx="180.3" cy="44.4" rx="1.0" ry="1.2" transform="rotate(-26 180.3 44.4)"/><ellipse cx="232.6" cy="88.8" rx="1.4" ry="0.8" transform="rotate(42 232.6 88.8)"/><ellipse cx="196.4" cy="67.4" rx="1.8" ry="0.7" transform="rotate(5 196.4 67.4)"/><ellipse cx="268.7" cy="91.7" rx="1.1" ry="0.8" transform="rotate(-35 268.7 91.7)"/><ellipse cx="312.5" cy="72.9" rx="1.1" ry="0.8" transform="rotate(-11 312.5 72.9)"/><ellipse cx="214.0" cy="22.1" rx="1.6" ry="0.8" transform="rotate(21 214.0 22.1)"/><ellipse cx="221.4" cy="97.2" rx="1.7" ry="1.0" transform="rotate(-37 221.4 97.2)"/><ellipse cx="247.6" cy="90.2" rx="1.5" ry="1.2" transform="rotate(53 247.6 90.2)"/><ellipse cx="260.1" cy="67.0" rx="1.0" ry="1.0" transform="rotate(30 260.1 67.0)"/><ellipse cx="247.3" cy="29.2" rx="1.4" ry="0.9" transform="rotate(-24 247.3 29.2)"/><ellipse cx="246.3" cy="63.6" rx="0.8" ry="1.3" transform="rotate(-32 246.3 63.6)"/><ellipse cx="293.2" cy="52.8" rx="1.1" ry="0.9" transform="rotate(-16 293.2 52.8)"/><ellipse cx="244.5" cy="86.1" rx="1.2" ry="0.7" transform="rotate(15 244.5 86.1)"/><ellipse cx="218.5" cy="75.7" rx="1.2" ry="0.7" transform="rotate(27 218.5 75.7)"/><ellipse cx="263.6" cy="78.9" rx="0.9" ry="0.9" transform="rotate(4 263.6 78.9)"/><ellipse cx="268.9" cy="90.5" rx="1.2" ry="1.3" transform="rotate(-2 268.9 90.5)"/><ellipse cx="210.6" cy="48.3" rx="1.4" ry="1.3" transform="rotate(19 210.6 48.3)"/><ellipse cx="186.7" cy="98.6" rx="1.1" ry="0.6" transform="rotate(-46 186.7 98.6)"/><ellipse cx="216.3" cy="51.7" rx="1.5" ry="1.3" transform="rotate(5 216.3 51.7)"/><ellipse cx="257.5" cy="17.2" rx="1.4" ry="1.2" transform="rotate(57 257.5 17.2)"/><ellipse cx="293.5" cy="55.6" rx="1.5" ry="0.7" transform="rotate(30 293.5 55.6)"/><ellipse cx="225.2" cy="22.6" rx="1.3" ry="1.2" transform="rotate(-57 225.2 22.6)"/><ellipse cx="227.5" cy="58.1" rx="1.2" ry="1.2" transform="rotate(-30 227.5 58.1)"/><ellipse cx="219.0" cy="82.3" rx="1.8" ry="0.8" transform="rotate(-53 219.0 82.3)"/><ellipse cx="235.7" cy="41.9" rx="1.0" ry="1.3" transform="rotate(34 235.7 41.9)"/><ellipse cx="185.9" cy="27.3" rx="1.9" ry="0.8" transform="rotate(20 185.9 27.3)"/><ellipse cx="274.6" cy="19.6" rx="1.8" ry="0.6" transform="rotate(38 274.6 19.6)"/><ellipse cx="193.8" cy="28.1" rx="1.5" ry="0.7" transform="rotate(49 193.8 28.1)"/><ellipse cx="237.5" cy="70.5" rx="1.1" ry="0.9" transform="rotate(11 237.5 70.5)"/><ellipse cx="258.2" cy="51.6" rx="1.6" ry="1.3" transform="rotate(-12 258.2 51.6)"/><ellipse cx="244.0" cy="18.8" rx="1.4" ry="1.3" transform="rotate(6 244.0 18.8)"/><ellipse cx="237.6" cy="106.8" rx="1.1" ry="0.9" transform="rotate(4 237.6 106.8)"/><ellipse cx="242.5" cy="72.2" rx="1.9" ry="0.9" transform="rotate(7 242.5 72.2)"/><ellipse cx="224.6" cy="78.7" rx="1.1" ry="0.7" transform="rotate(23 224.6 78.7)"/><ellipse cx="300.5" cy="73.9" rx="1.1" ry="1.0" transform="rotate(4 300.5 73.9)"/><ellipse cx="301.3" cy="74.7" rx="1.4" ry="0.7" transform="rotate(12 301.3 74.7)"/><ellipse cx="216.5" cy="47.0" rx="1.1" ry="1.2" transform="rotate(15 216.5 47.0)"/><ellipse cx="301.6" cy="65.2" rx="1.0" ry="1.0" transform="rotate(-42 301.6 65.2)"/><ellipse cx="194.8" cy="39.2" rx="0.9" ry="0.7" transform="rotate(6 194.8 39.2)"/><ellipse cx="243.0" cy="69.6" rx="1.7" ry="1.1" transform="rotate(27 243.0 69.6)"/><ellipse cx="196.6" cy="87.2" rx="1.8" ry="1.0" transform="rotate(-16 196.6 87.2)"/><ellipse cx="199.8" cy="54.2" rx="1.0" ry="0.9" transform="rotate(37 199.8 54.2)"/><ellipse cx="310.9" cy="72.2" rx="1.1" ry="0.6" transform="rotate(59 310.9 72.2)"/><ellipse cx="238.0" cy="74.1" rx="1.8" ry="1.3" transform="rotate(-52 238.0 74.1)"/><ellipse cx="242.2" cy="35.2" rx="1.0" ry="0.9" transform="rotate(-37 242.2 35.2)"/><ellipse cx="229.4" cy="79.1" rx="1.8" ry="0.8" transform="rotate(23 229.4 79.1)"/><ellipse cx="213.1" cy="89.6" rx="1.5" ry="0.8" transform="rotate(-41 213.1 89.6)"/><ellipse cx="250.9" cy="35.8" rx="1.3" ry="1.2" transform="rotate(-30 250.9 35.8)"/><ellipse cx="226.6" cy="13.5" rx="1.8" ry="1.0" transform="rotate(-31 226.6 13.5)"/><ellipse cx="185.4" cy="27.9" rx="1.6" ry="0.6" transform="rotate(31 185.4 27.9)"/><ellipse cx="218.6" cy="50.0" rx="1.4" ry="0.9" transform="rotate(4 218.6 50.0)"/><ellipse cx="263.0" cy="26.4" rx="1.0" ry="0.9" transform="rotate(42 263.0 26.4)"/><ellipse cx="268.1" cy="80.1" rx="1.5" ry="1.1" transform="rotate(-29 268.1 80.1)"/><ellipse cx="263.1" cy="15.9" rx="1.1" ry="1.0" transform="rotate(6 263.1 15.9)"/><ellipse cx="209.0" cy="72.6" rx="1.2" ry="0.6" transform="rotate(46 209.0 72.6)"/><ellipse cx="298.6" cy="58.2" rx="1.9" ry="1.1" transform="rotate(-56 298.6 58.2)"/><ellipse cx="184.6" cy="46.5" rx="1.6" ry="1.2" transform="rotate(-25 184.6 46.5)"/><ellipse cx="262.6" cy="65.7" rx="1.0" ry="1.1" transform="rotate(48 262.6 65.7)"/><ellipse cx="306.3" cy="98.2" rx="0.8" ry="1.1" transform="rotate(43 306.3 98.2)"/><ellipse cx="195.8" cy="36.6" rx="1.1" ry="1.3" transform="rotate(-39 195.8 36.6)"/><ellipse cx="223.9" cy="74.7" rx="1.1" ry="0.7" transform="rotate(30 223.9 74.7)"/><ellipse cx="264.8" cy="46.2" rx="1.6" ry="1.0" transform="rotate(-30 264.8 46.2)"/><ellipse cx="251.4" cy="39.0" rx="1.5" ry="1.0" transform="rotate(-1 251.4 39.0)"/><ellipse cx="293.5" cy="75.2" rx="1.6" ry="0.6" transform="rotate(2 293.5 75.2)"/><ellipse cx="224.6" cy="95.1" rx="0.8" ry="1.3" transform="rotate(36 224.6 95.1)"/><ellipse cx="242.3" cy="40.6" rx="1.6" ry="0.8" transform="rotate(22 242.3 40.6)"/><ellipse cx="242.8" cy="72.7" rx="1.4" ry="0.6" transform="rotate(57 242.8 72.7)"/><ellipse cx="183.4" cy="40.6" rx="1.2" ry="0.7" transform="rotate(-13 183.4 40.6)"/><ellipse cx="243.6" cy="66.6" rx="1.1" ry="1.0" transform="rotate(-50 243.6 66.6)"/><ellipse cx="295.1" cy="68.5" rx="1.2" ry="0.6" transform="rotate(18 295.1 68.5)"/><ellipse cx="246.5" cy="73.9" rx="1.3" ry="1.1" transform="rotate(45 246.5 73.9)"/><ellipse cx="197.6" cy="43.2" rx="0.8" ry="1.2" transform="rotate(26 197.6 43.2)"/><ellipse cx="222.5" cy="92.9" rx="1.2" ry="0.9" transform="rotate(8 222.5 92.9)"/><ellipse cx="260.2" cy="84.7" rx="1.8" ry="1.0" transform="rotate(22 260.2 84.7)"/><ellipse cx="294.7" cy="90.8" rx="1.6" ry="0.7" transform="rotate(14 294.7 90.8)"/><ellipse cx="225.9" cy="58.6" rx="1.4" ry="1.0" transform="rotate(-10 225.9 58.6)"/><ellipse cx="201.5" cy="40.3" rx="1.7" ry="1.1" transform="rotate(-36 201.5 40.3)"/><ellipse cx="252.2" cy="90.5" rx="0.9" ry="1.0" transform="rotate(15 252.2 90.5)"/><ellipse cx="191.6" cy="66.3" rx="1.7" ry="1.3" transform="rotate(20 191.6 66.3)"/><ellipse cx="186.9" cy="30.6" rx="1.0" ry="1.3" transform="rotate(12 186.9 30.6)"/><ellipse cx="261.6" cy="75.4" rx="0.8" ry="1.1" transform="rotate(-33 261.6 75.4)"/><ellipse cx="238.6" cy="98.7" rx="1.8" ry="0.7" transform="rotate(51 238.6 98.7)"/><ellipse cx="246.3" cy="64.2" rx="1.3" ry="1.2" transform="rotate(-15 246.3 64.2)"/><ellipse cx="269.8" cy="88.2" rx="1.3" ry="1.2" transform="rotate(14 269.8 88.2)"/><ellipse cx="235.7" cy="35.4" rx="0.9" ry="0.8" transform="rotate(-41 235.7 35.4)"/><ellipse cx="287.9" cy="105.0" rx="1.7" ry="1.1" transform="rotate(-10 287.9 105.0)"/><ellipse cx="272.3" cy="71.4" rx="1.9" ry="1.0" transform="rotate(-14 272.3 71.4)"/><ellipse cx="255.6" cy="76.9" rx="0.8" ry="1.0" transform="rotate(-18 255.6 76.9)"/><ellipse cx="192.9" cy="77.2" rx="1.9" ry="0.9" transform="rotate(13 192.9 77.2)"/><ellipse cx="270.6" cy="84.1" rx="1.6" ry="1.0" transform="rotate(21 270.6 84.1)"/><ellipse cx="269.2" cy="75.3" rx="1.6" ry="1.3" transform="rotate(15 269.2 75.3)"/><ellipse cx="221.4" cy="18.7" rx="0.9" ry="0.7" transform="rotate(14 221.4 18.7)"/><ellipse cx="276.4" cy="18.6" rx="1.2" ry="0.7" transform="rotate(54 276.4 18.6)"/><ellipse cx="210.9" cy="45.5" rx="1.2" ry="0.7" transform="rotate(17 210.9 45.5)"/><ellipse cx="186.5" cy="89.2" rx="0.9" ry="0.6" transform="rotate(-51 186.5 89.2)"/><ellipse cx="249.8" cy="24.8" rx="1.8" ry="0.8" transform="rotate(-19 249.8 24.8)"/><ellipse cx="297.6" cy="105.6" rx="1.5" ry="1.2" transform="rotate(-38 297.6 105.6)"/><ellipse cx="180.4" cy="74.5" rx="1.5" ry="0.8" transform="rotate(3 180.4 74.5)"/><ellipse cx="298.4" cy="105.7" rx="1.5" ry="0.8" transform="rotate(-7 298.4 105.7)"/><ellipse cx="260.9" cy="43.2" rx="0.9" ry="0.7" transform="rotate(-42 260.9 43.2)"/><ellipse cx="223.9" cy="79.2" rx="1.5" ry="1.2" transform="rotate(-41 223.9 79.2)"/><ellipse cx="267.2" cy="56.5" rx="1.6" ry="0.8" transform="rotate(31 267.2 56.5)"/><ellipse cx="274.3" cy="60.8" rx="1.4" ry="0.8" transform="rotate(-28 274.3 60.8)"/><ellipse cx="244.7" cy="61.2" rx="1.8" ry="0.9" transform="rotate(-41 244.7 61.2)"/><ellipse cx="296.5" cy="105.4" rx="1.6" ry="0.8" transform="rotate(-15 296.5 105.4)"/><ellipse cx="201.5" cy="39.2" rx="1.1" ry="1.3" transform="rotate(-33 201.5 39.2)"/><ellipse cx="191.9" cy="84.4" rx="0.8" ry="1.2" transform="rotate(-29 191.9 84.4)"/><ellipse cx="195.5" cy="47.9" rx="1.3" ry="1.0" transform="rotate(53 195.5 47.9)"/><ellipse cx="223.0" cy="40.1" rx="1.2" ry="0.9" transform="rotate(22 223.0 40.1)"/><ellipse cx="299.6" cy="10.4" rx="1.1" ry="1.2" transform="rotate(28 299.6 10.4)"/><ellipse cx="309.8" cy="87.2" rx="0.8" ry="0.9" transform="rotate(-24 309.8 87.2)"/><ellipse cx="228.1" cy="77.1" rx="1.0" ry="1.3" transform="rotate(-60 228.1 77.1)"/><ellipse cx="291.5" cy="50.0" rx="1.5" ry="0.6" transform="rotate(31 291.5 50.0)"/><ellipse cx="217.8" cy="11.6" rx="1.6" ry="1.2" transform="rotate(5 217.8 11.6)"/><ellipse cx="221.6" cy="62.1" rx="1.7" ry="1.2" transform="rotate(51 221.6 62.1)"/><ellipse cx="260.7" cy="48.5" rx="1.5" ry="1.0" transform="rotate(-32 260.7 48.5)"/><ellipse cx="181.7" cy="39.4" rx="1.0" ry="0.7" transform="rotate(-14 181.7 39.4)"/><ellipse cx="297.6" cy="104.5" rx="1.7" ry="1.2" transform="rotate(-45 297.6 104.5)"/><ellipse cx="191.0" cy="67.6" rx="1.5" ry="1.0" transform="rotate(42 191.0 67.6)"/><ellipse cx="197.9" cy="43.9" rx="1.2" ry="0.8" transform="rotate(46 197.9 43.9)"/><ellipse cx="243.5" cy="101.1" rx="1.9" ry="0.8" transform="rotate(39 243.5 101.1)"/><ellipse cx="225.2" cy="44.5" rx="1.2" ry="1.1" transform="rotate(43 225.2 44.5)"/><ellipse cx="183.7" cy="71.7" rx="1.3" ry="1.3" transform="rotate(22 183.7 71.7)"/><ellipse cx="257.8" cy="70.1" rx="1.7" ry="0.9" transform="rotate(0 257.8 70.1)"/><ellipse cx="191.7" cy="39.9" rx="1.1" ry="0.7" transform="rotate(9 191.7 39.9)"/><ellipse cx="252.2" cy="38.0" rx="0.9" ry="0.8" transform="rotate(-51 252.2 38.0)"/><ellipse cx="244.0" cy="28.3" rx="1.3" ry="1.2" transform="rotate(-35 244.0 28.3)"/><ellipse cx="252.5" cy="65.5" rx="0.9" ry="0.8" transform="rotate(50 252.5 65.5)"/><ellipse cx="227.1" cy="72.5" rx="1.1" ry="0.7" transform="rotate(-34 227.1 72.5)"/><ellipse cx="184.8" cy="67.7" rx="1.1" ry="0.9" transform="rotate(-54 184.8 67.7)"/><ellipse cx="157.9" cy="67.6" rx="1.2" ry="0.6" transform="rotate(32 157.9 67.6)"/><ellipse cx="195.0" cy="71.7" rx="1.3" ry="1.0" transform="rotate(-23 195.0 71.7)"/><ellipse cx="216.1" cy="84.7" rx="1.4" ry="1.0" transform="rotate(6 216.1 84.7)"/><ellipse cx="168.4" cy="66.2" rx="0.9" ry="0.6" transform="rotate(29 168.4 66.2)"/><ellipse cx="164.7" cy="64.1" rx="1.0" ry="1.1" transform="rotate(-19 164.7 64.1)"/><ellipse cx="155.9" cy="70.3" rx="1.5" ry="1.1" transform="rotate(60 155.9 70.3)"/><ellipse cx="154.7" cy="107.5" rx="0.9" ry="0.8" transform="rotate(-38 154.7 107.5)"/><ellipse cx="198.0" cy="88.0" rx="1.2" ry="0.7" transform="rotate(22 198.0 88.0)"/><ellipse cx="177.4" cy="78.6" rx="0.8" ry="0.9" transform="rotate(47 177.4 78.6)"/><ellipse cx="147.2" cy="64.2" rx="1.4" ry="0.9" transform="rotate(28 147.2 64.2)"/><ellipse cx="219.5" cy="61.2" rx="1.3" ry="0.7" transform="rotate(12 219.5 61.2)"/><ellipse cx="186.3" cy="65.4" rx="1.6" ry="0.8" transform="rotate(-8 186.3 65.4)"/><ellipse cx="148.7" cy="72.3" rx="1.2" ry="0.7" transform="rotate(42 148.7 72.3)"/><ellipse cx="233.2" cy="72.2" rx="1.2" ry="1.0" transform="rotate(56 233.2 72.2)"/><ellipse cx="151.9" cy="81.4" rx="1.5" ry="0.6" transform="rotate(-14 151.9 81.4)"/><ellipse cx="204.8" cy="74.5" rx="1.5" ry="1.1" transform="rotate(55 204.8 74.5)"/><ellipse cx="203.3" cy="80.1" rx="1.4" ry="1.0" transform="rotate(36 203.3 80.1)"/><ellipse cx="218.2" cy="90.5" rx="1.3" ry="1.0" transform="rotate(-17 218.2 90.5)"/><ellipse cx="162.3" cy="67.1" rx="1.2" ry="0.7" transform="rotate(-33 162.3 67.1)"/><ellipse cx="162.5" cy="70.2" rx="1.2" ry="0.6" transform="rotate(-38 162.5 70.2)"/><ellipse cx="177.4" cy="66.4" rx="1.5" ry="0.9" transform="rotate(-54 177.4 66.4)"/><ellipse cx="191.1" cy="67.7" rx="1.4" ry="0.7" transform="rotate(-21 191.1 67.7)"/><ellipse cx="169.7" cy="67.0" rx="1.3" ry="1.1" transform="rotate(-9 169.7 67.0)"/><ellipse cx="179.6" cy="63.1" rx="1.0" ry="1.1" transform="rotate(-3 179.6 63.1)"/><ellipse cx="219.6" cy="72.3" rx="1.1" ry="0.9" transform="rotate(-17 219.6 72.3)"/><ellipse cx="219.9" cy="72.3" rx="0.9" ry="0.9" transform="rotate(36 219.9 72.3)"/><ellipse cx="223.7" cy="104.4" rx="1.2" ry="0.7" transform="rotate(-19 223.7 104.4)"/><ellipse cx="197.6" cy="81.8" rx="1.2" ry="0.8" transform="rotate(1 197.6 81.8)"/><ellipse cx="216.7" cy="84.6" rx="1.4" ry="0.6" transform="rotate(4 216.7 84.6)"/><ellipse cx="180.1" cy="63.6" rx="1.3" ry="1.1" transform="rotate(-53 180.1 63.6)"/><ellipse cx="216.3" cy="63.3" rx="1.6" ry="0.6" transform="rotate(1 216.3 63.3)"/><ellipse cx="223.0" cy="80.8" rx="1.3" ry="0.7" transform="rotate(-39 223.0 80.8)"/><ellipse cx="151.4" cy="99.2" rx="1.5" ry="1.0" transform="rotate(20 151.4 99.2)"/><ellipse cx="177.7" cy="67.4" rx="0.9" ry="0.8" transform="rotate(-20 177.7 67.4)"/><ellipse cx="187.6" cy="70.6" rx="0.9" ry="0.9" transform="rotate(5 187.6 70.6)"/><ellipse cx="209.6" cy="84.8" rx="1.5" ry="1.1" transform="rotate(-49 209.6 84.8)"/><ellipse cx="188.3" cy="79.7" rx="1.0" ry="1.1" transform="rotate(-12 188.3 79.7)"/><ellipse cx="221.4" cy="61.7" rx="1.2" ry="1.1" transform="rotate(17 221.4 61.7)"/><ellipse cx="158.3" cy="66.1" rx="0.9" ry="0.7" transform="rotate(53 158.3 66.1)"/><ellipse cx="316.3" cy="142.9" rx="1.6" ry="1.0" transform="rotate(-56 316.3 142.9)"/><ellipse cx="307.7" cy="129.4" rx="1.2" ry="0.8" transform="rotate(-47 307.7 129.4)"/><ellipse cx="323.5" cy="141.7" rx="1.3" ry="0.6" transform="rotate(11 323.5 141.7)"/><ellipse cx="292.6" cy="130.0" rx="1.4" ry="0.6" transform="rotate(46 292.6 130.0)"/><ellipse cx="303.9" cy="113.9" rx="1.4" ry="1.0" transform="rotate(25 303.9 113.9)"/><ellipse cx="306.0" cy="131.7" rx="1.4" ry="1.0" transform="rotate(48 306.0 131.7)"/><ellipse cx="287.4" cy="141.5" rx="1.3" ry="1.0" transform="rotate(-33 287.4 141.5)"/><ellipse cx="315.0" cy="143.1" rx="1.5" ry="0.8" transform="rotate(52 315.0 143.1)"/><ellipse cx="294.4" cy="115.2" rx="1.2" ry="0.8" transform="rotate(9 294.4 115.2)"/><ellipse cx="298.7" cy="111.0" rx="1.6" ry="0.6" transform="rotate(-33 298.7 111.0)"/><ellipse cx="314.8" cy="128.7" rx="1.6" ry="0.9" transform="rotate(18 314.8 128.7)"/><ellipse cx="316.9" cy="135.5" rx="0.8" ry="1.0" transform="rotate(-34 316.9 135.5)"/><ellipse cx="316.2" cy="139.3" rx="0.9" ry="0.8" transform="rotate(-51 316.2 139.3)"/><ellipse cx="280.6" cy="141.9" rx="1.1" ry="0.7" transform="rotate(-46 280.6 141.9)"/><ellipse cx="315.3" cy="120.9" rx="1.5" ry="1.1" transform="rotate(-3 315.3 120.9)"/><ellipse cx="295.3" cy="114.1" rx="1.5" ry="0.7" transform="rotate(49 295.3 114.1)"/><ellipse cx="310.1" cy="113.6" rx="0.9" ry="1.0" transform="rotate(24 310.1 113.6)"/><ellipse cx="308.1" cy="120.4" rx="0.9" ry="0.7" transform="rotate(-53 308.1 120.4)"/><ellipse cx="289.0" cy="141.9" rx="1.5" ry="0.7" transform="rotate(-15 289.0 141.9)"/><ellipse cx="296.4" cy="118.2" rx="1.4" ry="0.7" transform="rotate(-14 296.4 118.2)"/><ellipse cx="291.1" cy="143.9" rx="1.1" ry="0.8" transform="rotate(-24 291.1 143.9)"/><ellipse cx="306.4" cy="141.7" rx="1.4" ry="0.9" transform="rotate(51 306.4 141.7)"/><ellipse cx="280.2" cy="125.4" rx="1.1" ry="0.7" transform="rotate(1 280.2 125.4)"/><ellipse cx="315.7" cy="141.6" rx="1.1" ry="0.7" transform="rotate(24 315.7 141.6)"/><ellipse cx="318.8" cy="141.8" rx="1.2" ry="0.7" transform="rotate(5 318.8 141.8)"/><ellipse cx="304.3" cy="143.3" rx="1.4" ry="0.9" transform="rotate(-31 304.3 143.3)"/><ellipse cx="317.9" cy="120.3" rx="1.1" ry="0.8" transform="rotate(53 317.9 120.3)"/><ellipse cx="324.7" cy="141.3" rx="0.8" ry="0.8" transform="rotate(-43 324.7 141.3)"/><ellipse cx="321.4" cy="133.4" rx="1.0" ry="0.6" transform="rotate(-57 321.4 133.4)"/><ellipse cx="327.1" cy="136.0" rx="1.2" ry="1.1" transform="rotate(2 327.1 136.0)"/><ellipse cx="317.0" cy="143.1" rx="1.1" ry="1.0" transform="rotate(12 317.0 143.1)"/><ellipse cx="314.7" cy="139.4" rx="0.9" ry="1.1" transform="rotate(-41 314.7 139.4)"/><ellipse cx="286.1" cy="129.1" rx="1.5" ry="1.0" transform="rotate(-28 286.1 129.1)"/><ellipse cx="304.2" cy="140.1" rx="1.3" ry="0.9" transform="rotate(42 304.2 140.1)"/><ellipse cx="310.9" cy="112.3" rx="1.2" ry="1.1" transform="rotate(18 310.9 112.3)"/><ellipse cx="286.5" cy="126.8" rx="1.3" ry="0.7" transform="rotate(-13 286.5 126.8)"/><ellipse cx="283.4" cy="121.6" rx="1.2" ry="0.7" transform="rotate(-29 283.4 121.6)"/><ellipse cx="287.6" cy="116.6" rx="1.0" ry="1.0" transform="rotate(16 287.6 116.6)"/><ellipse cx="321.3" cy="141.2" rx="0.9" ry="0.7" transform="rotate(55 321.3 141.2)"/><ellipse cx="280.2" cy="141.3" rx="0.9" ry="0.9" transform="rotate(29 280.2 141.3)"/><ellipse cx="15.9" cy="66.2" rx="0.8" ry="0.8" transform="rotate(-51 15.9 66.2)"/><ellipse cx="804.4" cy="66.2" rx="1.5" ry="0.7" transform="rotate(15 804.4 66.2)"/><ellipse cx="707.9" cy="65.4" rx="1.6" ry="0.7" transform="rotate(47 707.9 65.4)"/><ellipse cx="772.2" cy="26.6" rx="1.1" ry="0.8" transform="rotate(32 772.2 26.6)"/><ellipse cx="630.0" cy="52.3" rx="0.8" ry="0.8" transform="rotate(40 630.0 52.3)"/><ellipse cx="611.5" cy="64.0" rx="1.1" ry="0.6" transform="rotate(60 611.5 64.0)"/><ellipse cx="746.7" cy="73.8" rx="1.5" ry="1.1" transform="rotate(-5 746.7 73.8)"/><ellipse cx="763.3" cy="50.1" rx="0.8" ry="0.7" transform="rotate(-16 763.3 50.1)"/><ellipse cx="684.0" cy="36.5" rx="1.3" ry="0.8" transform="rotate(45 684.0 36.5)"/><ellipse cx="775.6" cy="70.1" rx="0.9" ry="1.1" transform="rotate(55 775.6 70.1)"/><ellipse cx="4.8" cy="78.1" rx="0.9" ry="1.0" transform="rotate(-35 4.8 78.1)"/><ellipse cx="793.3" cy="78.1" rx="1.6" ry="1.0" transform="rotate(-21 793.3 78.1)"/><ellipse cx="697.6" cy="45.9" rx="0.9" ry="0.9" transform="rotate(45 697.6 45.9)"/><ellipse cx="625.4" cy="51.7" rx="1.2" ry="0.8" transform="rotate(-18 625.4 51.7)"/><ellipse cx="32.0" cy="81.8" rx="1.4" ry="1.1" transform="rotate(-46 32.0 81.8)"/><ellipse cx="820.5" cy="81.8" rx="1.6" ry="0.8" transform="rotate(58 820.5 81.8)"/><ellipse cx="627.4" cy="40.9" rx="1.0" ry="1.1" transform="rotate(-31 627.4 40.9)"/><ellipse cx="635.9" cy="54.9" rx="1.0" ry="0.6" transform="rotate(29 635.9 54.9)"/><ellipse cx="762.2" cy="27.2" rx="0.9" ry="1.0" transform="rotate(35 762.2 27.2)"/><ellipse cx="3.3" cy="55.0" rx="1.1" ry="1.2" transform="rotate(10 3.3 55.0)"/><ellipse cx="791.8" cy="55.0" rx="1.3" ry="1.0" transform="rotate(-24 791.8 55.0)"/><ellipse cx="626.0" cy="47.9" rx="1.0" ry="0.6" transform="rotate(43 626.0 47.9)"/><ellipse cx="620.9" cy="73.1" rx="1.2" ry="0.7" transform="rotate(32 620.9 73.1)"/><ellipse cx="628.2" cy="63.5" rx="1.0" ry="0.8" transform="rotate(60 628.2 63.5)"/><ellipse cx="676.2" cy="44.4" rx="1.3" ry="1.0" transform="rotate(-56 676.2 44.4)"/><ellipse cx="587.5" cy="65.1" rx="1.4" ry="1.0" transform="rotate(5 587.5 65.1)"/><ellipse cx="2.0" cy="60.2" rx="1.5" ry="0.8" transform="rotate(25 2.0 60.2)"/><ellipse cx="790.5" cy="60.2" rx="1.0" ry="0.8" transform="rotate(24 790.5 60.2)"/><ellipse cx="611.0" cy="75.2" rx="1.6" ry="0.9" transform="rotate(32 611.0 75.2)"/><ellipse cx="766.0" cy="51.0" rx="1.4" ry="0.8" transform="rotate(27 766.0 51.0)"/><ellipse cx="622.0" cy="48.7" rx="1.7" ry="0.9" transform="rotate(34 622.0 48.7)"/><ellipse cx="663.3" cy="23.6" rx="1.1" ry="1.0" transform="rotate(-4 663.3 23.6)"/><ellipse cx="51.4" cy="72.1" rx="0.9" ry="0.8" transform="rotate(-46 51.4 72.1)"/><ellipse cx="839.9" cy="72.1" rx="1.7" ry="0.7" transform="rotate(14 839.9 72.1)"/><ellipse cx="630.8" cy="41.9" rx="1.2" ry="1.2" transform="rotate(-2 630.8 41.9)"/><ellipse cx="662.8" cy="25.7" rx="1.7" ry="0.6" transform="rotate(-59 662.8 25.7)"/><ellipse cx="766.1" cy="60.1" rx="1.4" ry="0.9" transform="rotate(-37 766.1 60.1)"/><ellipse cx="587.4" cy="79.5" rx="1.5" ry="0.7" transform="rotate(59 587.4 79.5)"/><ellipse cx="615.9" cy="55.4" rx="1.7" ry="1.0" transform="rotate(-11 615.9 55.4)"/><ellipse cx="690.4" cy="47.4" rx="1.5" ry="1.2" transform="rotate(-46 690.4 47.4)"/><ellipse cx="589.7" cy="89.3" rx="1.2" ry="0.9" transform="rotate(-11 589.7 89.3)"/><ellipse cx="626.3" cy="45.3" rx="1.1" ry="1.1" transform="rotate(-28 626.3 45.3)"/><ellipse cx="616.7" cy="73.2" rx="0.9" ry="0.9" transform="rotate(-1 616.7 73.2)"/><ellipse cx="647.5" cy="37.7" rx="0.9" ry="0.9" transform="rotate(-11 647.5 37.7)"/><ellipse cx="696.8" cy="62.7" rx="1.7" ry="1.2" transform="rotate(-54 696.8 62.7)"/><ellipse cx="742.7" cy="80.8" rx="0.9" ry="0.8" transform="rotate(-49 742.7 80.8)"/><ellipse cx="701.4" cy="48.2" rx="1.2" ry="1.1" transform="rotate(-47 701.4 48.2)"/><ellipse cx="769.5" cy="65.8" rx="0.8" ry="0.7" transform="rotate(48 769.5 65.8)"/><ellipse cx="593.9" cy="66.6" rx="0.9" ry="0.7" transform="rotate(-53 593.9 66.6)"/><ellipse cx="617.3" cy="48.2" rx="1.3" ry="1.2" transform="rotate(-55 617.3 48.2)"/><ellipse cx="690.8" cy="37.5" rx="1.2" ry="0.7" transform="rotate(-44 690.8 37.5)"/><ellipse cx="608.0" cy="45.2" rx="1.4" ry="0.7" transform="rotate(51 608.0 45.2)"/><ellipse cx="608.1" cy="78.5" rx="1.6" ry="0.6" transform="rotate(-21 608.1 78.5)"/><ellipse cx="718.1" cy="55.2" rx="1.0" ry="0.9" transform="rotate(4 718.1 55.2)"/><ellipse cx="589.8" cy="65.7" rx="0.8" ry="0.8" transform="rotate(-45 589.8 65.7)"/><ellipse cx="0.7" cy="60.0" rx="1.6" ry="0.9" transform="rotate(-12 0.7 60.0)"/><ellipse cx="789.2" cy="60.0" rx="1.3" ry="0.8" transform="rotate(46 789.2 60.0)"/><ellipse cx="710.8" cy="44.9" rx="1.2" ry="0.8" transform="rotate(-21 710.8 44.9)"/><ellipse cx="53.9" cy="65.6" rx="1.0" ry="0.8" transform="rotate(-58 53.9 65.6)"/><ellipse cx="842.4" cy="65.6" rx="1.0" ry="0.6" transform="rotate(-14 842.4 65.6)"/><ellipse cx="615.8" cy="56.3" rx="1.6" ry="0.7" transform="rotate(-2 615.8 56.3)"/><ellipse cx="616.1" cy="79.0" rx="1.2" ry="0.8" transform="rotate(55 616.1 79.0)"/><ellipse cx="771.6" cy="63.3" rx="1.4" ry="0.9" transform="rotate(16 771.6 63.3)"/><ellipse cx="685.7" cy="39.6" rx="1.0" ry="1.0" transform="rotate(-4 685.7 39.6)"/><ellipse cx="610.3" cy="59.3" rx="1.1" ry="0.9" transform="rotate(-32 610.3 59.3)"/><ellipse cx="26.1" cy="70.3" rx="1.4" ry="0.9" transform="rotate(-24 26.1 70.3)"/><ellipse cx="814.6" cy="70.3" rx="1.5" ry="1.0" transform="rotate(31 814.6 70.3)"/><ellipse cx="17.5" cy="71.4" rx="1.7" ry="0.8" transform="rotate(-9 17.5 71.4)"/><ellipse cx="806.0" cy="71.4" rx="0.8" ry="1.2" transform="rotate(-35 806.0 71.4)"/><ellipse cx="645.1" cy="40.4" rx="1.5" ry="0.8" transform="rotate(33 645.1 40.4)"/><ellipse cx="599.2" cy="69.1" rx="1.1" ry="0.8" transform="rotate(-55 599.2 69.1)"/><ellipse cx="651.9" cy="51.2" rx="1.4" ry="0.7" transform="rotate(5 651.9 51.2)"/><ellipse cx="613.2" cy="75.4" rx="1.0" ry="1.2" transform="rotate(40 613.2 75.4)"/><ellipse cx="0.4" cy="56.3" rx="1.2" ry="1.1" transform="rotate(12 0.4 56.3)"/><ellipse cx="788.9" cy="56.3" rx="0.9" ry="1.1" transform="rotate(3 788.9 56.3)"/><ellipse cx="611.9" cy="53.5" rx="1.6" ry="1.2" transform="rotate(33 611.9 53.5)"/><ellipse cx="42.3" cy="78.5" rx="1.7" ry="0.9" transform="rotate(-43 42.3 78.5)"/><ellipse cx="830.8" cy="78.5" rx="1.4" ry="0.8" transform="rotate(-32 830.8 78.5)"/><ellipse cx="625.0" cy="42.4" rx="1.0" ry="1.2" transform="rotate(-34 625.0 42.4)"/><ellipse cx="676.8" cy="38.6" rx="1.0" ry="1.0" transform="rotate(1 676.8 38.6)"/><ellipse cx="663.5" cy="40.1" rx="1.3" ry="0.9" transform="rotate(54 663.5 40.1)"/><ellipse cx="23.2" cy="68.4" rx="1.0" ry="0.9" transform="rotate(-36 23.2 68.4)"/><ellipse cx="811.7" cy="68.4" rx="0.9" ry="0.9" transform="rotate(-36 811.7 68.4)"/><ellipse cx="588.3" cy="29.1" rx="0.8" ry="1.1" transform="rotate(12 588.3 29.1)"/><ellipse cx="599.7" cy="56.2" rx="1.0" ry="0.7" transform="rotate(-28 599.7 56.2)"/><ellipse cx="613.9" cy="78.3" rx="1.1" ry="0.7" transform="rotate(29 613.9 78.3)"/><ellipse cx="755.1" cy="58.9" rx="1.2" ry="1.0" transform="rotate(43 755.1 58.9)"/><ellipse cx="617.6" cy="49.3" rx="1.5" ry="0.8" transform="rotate(9 617.6 49.3)"/><ellipse cx="769.2" cy="53.2" rx="1.5" ry="1.1" transform="rotate(-45 769.2 53.2)"/><ellipse cx="612.6" cy="73.7" rx="0.8" ry="0.8" transform="rotate(-44 612.6 73.7)"/><ellipse cx="5.3" cy="86.0" rx="1.3" ry="1.0" transform="rotate(44 5.3 86.0)"/><ellipse cx="793.8" cy="86.0" rx="0.9" ry="0.7" transform="rotate(6 793.8 86.0)"/><ellipse cx="756.4" cy="73.5" rx="0.9" ry="0.9" transform="rotate(13 756.4 73.5)"/><ellipse cx="609.1" cy="50.0" rx="1.2" ry="1.0" transform="rotate(27 609.1 50.0)"/><ellipse cx="603.9" cy="57.2" rx="1.1" ry="1.1" transform="rotate(54 603.9 57.2)"/><ellipse cx="2.4" cy="62.8" rx="1.1" ry="1.1" transform="rotate(47 2.4 62.8)"/><ellipse cx="790.9" cy="62.8" rx="1.0" ry="0.9" transform="rotate(-38 790.9 62.8)"/><ellipse cx="624.6" cy="45.9" rx="1.6" ry="0.8" transform="rotate(48 624.6 45.9)"/><ellipse cx="607.6" cy="64.5" rx="0.9" ry="0.9" transform="rotate(-56 607.6 64.5)"/><ellipse cx="9.0" cy="56.6" rx="1.6" ry="0.8" transform="rotate(-47 9.0 56.6)"/><ellipse cx="797.5" cy="56.6" rx="0.8" ry="0.7" transform="rotate(35 797.5 56.6)"/><ellipse cx="758.0" cy="28.5" rx="1.2" ry="0.9" transform="rotate(37 758.0 28.5)"/><ellipse cx="775.2" cy="62.3" rx="1.6" ry="1.1" transform="rotate(-53 775.2 62.3)"/><ellipse cx="692.2" cy="27.0" rx="1.6" ry="1.1" transform="rotate(15 692.2 27.0)"/><ellipse cx="609.9" cy="69.0" rx="1.7" ry="1.0" transform="rotate(-8 609.9 69.0)"/><ellipse cx="769.2" cy="27.6" rx="1.1" ry="1.1" transform="rotate(-53 769.2 27.6)"/><ellipse cx="772.6" cy="24.8" rx="1.4" ry="0.7" transform="rotate(43 772.6 24.8)"/><ellipse cx="674.9" cy="39.3" rx="1.3" ry="1.1" transform="rotate(59 674.9 39.3)"/><ellipse cx="584.2" cy="36.8" rx="1.5" ry="0.8" transform="rotate(-51 584.2 36.8)"/><ellipse cx="768.1" cy="55.7" rx="1.5" ry="0.9" transform="rotate(-42 768.1 55.7)"/><ellipse cx="651.8" cy="31.7" rx="1.2" ry="0.9" transform="rotate(43 651.8 31.7)"/><ellipse cx="-3.2" cy="73.4" rx="1.1" ry="1.1" transform="rotate(-1 -3.2 73.4)"/><ellipse cx="785.3" cy="73.4" rx="1.5" ry="0.9" transform="rotate(-4 785.3 73.4)"/><ellipse cx="611.9" cy="70.8" rx="0.9" ry="0.6" transform="rotate(36 611.9 70.8)"/><ellipse cx="585.7" cy="30.8" rx="0.9" ry="0.9" transform="rotate(-54 585.7 30.8)"/><ellipse cx="25.0" cy="67.0" rx="0.8" ry="0.8" transform="rotate(-30 25.0 67.0)"/><ellipse cx="813.5" cy="67.0" rx="1.3" ry="0.9" transform="rotate(-16 813.5 67.0)"/><ellipse cx="617.4" cy="68.6" rx="1.1" ry="1.0" transform="rotate(-33 617.4 68.6)"/><ellipse cx="663.7" cy="52.8" rx="0.9" ry="0.6" transform="rotate(-4 663.7 52.8)"/><ellipse cx="22.1" cy="76.4" rx="0.9" ry="0.9" transform="rotate(38 22.1 76.4)"/><ellipse cx="810.6" cy="76.4" rx="1.4" ry="0.9" transform="rotate(-36 810.6 76.4)"/><ellipse cx="778.5" cy="29.6" rx="1.1" ry="0.9" transform="rotate(-24 778.5 29.6)"/><ellipse cx="669.2" cy="37.2" rx="1.6" ry="1.1" transform="rotate(15 669.2 37.2)"/><ellipse cx="692.6" cy="23.8" rx="1.6" ry="1.1" transform="rotate(-13 692.6 23.8)"/><ellipse cx="56.2" cy="73.2" rx="1.1" ry="1.0" transform="rotate(27 56.2 73.2)"/><ellipse cx="844.7" cy="73.2" rx="1.7" ry="1.0" transform="rotate(-14 844.7 73.2)"/><ellipse cx="55.7" cy="72.0" rx="1.7" ry="1.0" transform="rotate(-56 55.7 72.0)"/><ellipse cx="844.2" cy="72.0" rx="1.7" ry="0.9" transform="rotate(-34 844.2 72.0)"/><ellipse cx="598.7" cy="73.9" rx="1.0" ry="0.9" transform="rotate(-22 598.7 73.9)"/><ellipse cx="10.9" cy="73.7" rx="1.3" ry="1.0" transform="rotate(-32 10.9 73.7)"/><ellipse cx="799.4" cy="73.7" rx="0.9" ry="0.6" transform="rotate(-19 799.4 73.7)"/><ellipse cx="610.2" cy="71.7" rx="1.6" ry="0.6" transform="rotate(-4 610.2 71.7)"/><ellipse cx="767.0" cy="29.9" rx="1.6" ry="0.9" transform="rotate(36 767.0 29.9)"/><ellipse cx="638.6" cy="40.8" rx="1.5" ry="0.9" transform="rotate(-56 638.6 40.8)"/><ellipse cx="660.7" cy="48.0" rx="1.5" ry="1.1" transform="rotate(19 660.7 48.0)"/><ellipse cx="766.7" cy="57.0" rx="1.7" ry="1.2" transform="rotate(-59 766.7 57.0)"/><ellipse cx="635.7" cy="59.6" rx="1.4" ry="0.9" transform="rotate(50 635.7 59.6)"/><ellipse cx="714.9" cy="49.7" rx="1.4" ry="0.9" transform="rotate(0 714.9 49.7)"/><ellipse cx="633.2" cy="46.4" rx="1.0" ry="0.7" transform="rotate(-41 633.2 46.4)"/><ellipse cx="638.4" cy="41.7" rx="1.2" ry="0.9" transform="rotate(-35 638.4 41.7)"/><ellipse cx="691.8" cy="43.4" rx="1.6" ry="0.8" transform="rotate(42 691.8 43.4)"/><ellipse cx="22.1" cy="77.2" rx="1.4" ry="1.0" transform="rotate(-26 22.1 77.2)"/><ellipse cx="810.6" cy="77.2" rx="0.9" ry="0.8" transform="rotate(54 810.6 77.2)"/><ellipse cx="496.5" cy="90.0" rx="1.6" ry="0.7" transform="rotate(14 496.5 90.0)"/><ellipse cx="519.3" cy="96.6" rx="1.2" ry="0.9" transform="rotate(12 519.3 96.6)"/><ellipse cx="503.8" cy="103.9" rx="1.0" ry="0.6" transform="rotate(-37 503.8 103.9)"/><ellipse cx="498.2" cy="65.4" rx="1.5" ry="1.0" transform="rotate(33 498.2 65.4)"/><ellipse cx="521.7" cy="87.6" rx="1.2" ry="0.7" transform="rotate(-18 521.7 87.6)"/><ellipse cx="531.8" cy="72.8" rx="1.2" ry="1.1" transform="rotate(22 531.8 72.8)"/><ellipse cx="496.7" cy="82.7" rx="0.8" ry="0.8" transform="rotate(20 496.7 82.7)"/><ellipse cx="516.6" cy="62.7" rx="0.8" ry="1.0" transform="rotate(-10 516.6 62.7)"/><ellipse cx="523.5" cy="100.5" rx="0.8" ry="0.9" transform="rotate(-41 523.5 100.5)"/><ellipse cx="512.0" cy="87.9" rx="0.8" ry="1.1" transform="rotate(47 512.0 87.9)"/><ellipse cx="545.8" cy="88.8" rx="0.9" ry="1.0" transform="rotate(41 545.8 88.8)"/><ellipse cx="550.3" cy="76.0" rx="0.9" ry="0.6" transform="rotate(33 550.3 76.0)"/><ellipse cx="496.7" cy="90.4" rx="1.4" ry="1.1" transform="rotate(15 496.7 90.4)"/><ellipse cx="506.3" cy="75.8" rx="1.6" ry="1.1" transform="rotate(-19 506.3 75.8)"/><ellipse cx="542.5" cy="88.7" rx="1.0" ry="1.0" transform="rotate(8 542.5 88.7)"/><ellipse cx="530.2" cy="66.5" rx="1.0" ry="0.9" transform="rotate(-25 530.2 66.5)"/><ellipse cx="520.8" cy="75.5" rx="1.4" ry="0.7" transform="rotate(17 520.8 75.5)"/><ellipse cx="505.4" cy="99.8" rx="1.0" ry="0.8" transform="rotate(-10 505.4 99.8)"/><ellipse cx="506.0" cy="65.7" rx="1.0" ry="1.1" transform="rotate(45 506.0 65.7)"/><ellipse cx="503.7" cy="67.3" rx="1.4" ry="0.8" transform="rotate(7 503.7 67.3)"/><ellipse cx="550.2" cy="73.3" rx="1.3" ry="1.0" transform="rotate(-37 550.2 73.3)"/><ellipse cx="500.1" cy="96.9" rx="1.5" ry="0.9" transform="rotate(-19 500.1 96.9)"/><ellipse cx="533.4" cy="76.9" rx="1.4" ry="0.9" transform="rotate(24 533.4 76.9)"/><ellipse cx="502.5" cy="105.8" rx="1.0" ry="0.9" transform="rotate(45 502.5 105.8)"/><ellipse cx="530.8" cy="68.4" rx="1.2" ry="0.9" transform="rotate(43 530.8 68.4)"/><ellipse cx="502.7" cy="79.1" rx="1.5" ry="0.8" transform="rotate(-48 502.7 79.1)"/><ellipse cx="535.2" cy="94.2" rx="1.3" ry="0.7" transform="rotate(39 535.2 94.2)"/><ellipse cx="498.7" cy="81.0" rx="0.9" ry="0.8" transform="rotate(59 498.7 81.0)"/><ellipse cx="548.9" cy="85.5" rx="1.3" ry="1.1" transform="rotate(10 548.9 85.5)"/><ellipse cx="545.3" cy="87.7" rx="1.5" ry="0.6" transform="rotate(-20 545.3 87.7)"/><ellipse cx="542.1" cy="106.6" rx="0.9" ry="0.8" transform="rotate(44 542.1 106.6)"/><ellipse cx="513.8" cy="102.2" rx="1.1" ry="0.7" transform="rotate(-11 513.8 102.2)"/><ellipse cx="503.7" cy="94.1" rx="1.1" ry="1.0" transform="rotate(7 503.7 94.1)"/><ellipse cx="502.7" cy="97.1" rx="1.5" ry="0.8" transform="rotate(-8 502.7 97.1)"/><ellipse cx="506.2" cy="64.6" rx="1.6" ry="0.7" transform="rotate(-53 506.2 64.6)"/><ellipse cx="516.7" cy="93.3" rx="1.5" ry="0.8" transform="rotate(43 516.7 93.3)"/><ellipse cx="533.7" cy="92.7" rx="1.3" ry="0.8" transform="rotate(-43 533.7 92.7)"/><ellipse cx="513.0" cy="104.2" rx="1.6" ry="0.6" transform="rotate(43 513.0 104.2)"/><ellipse cx="549.3" cy="71.3" rx="1.5" ry="0.7" transform="rotate(-20 549.3 71.3)"/><ellipse cx="527.1" cy="71.5" rx="1.6" ry="0.6" transform="rotate(54 527.1 71.5)"/><ellipse cx="278.8" cy="137.3" rx="0.8" ry="0.8" transform="rotate(57 278.8 137.3)"/><ellipse cx="252.6" cy="130.0" rx="1.4" ry="0.8" transform="rotate(56 252.6 130.0)"/><ellipse cx="241.3" cy="122.9" rx="1.4" ry="1.0" transform="rotate(-1 241.3 122.9)"/><ellipse cx="285.3" cy="119.8" rx="1.4" ry="0.6" transform="rotate(-7 285.3 119.8)"/><ellipse cx="259.4" cy="123.3" rx="1.2" ry="0.9" transform="rotate(44 259.4 123.3)"/><ellipse cx="244.4" cy="120.5" rx="1.2" ry="0.9" transform="rotate(-42 244.4 120.5)"/><ellipse cx="284.6" cy="122.8" rx="0.9" ry="0.8" transform="rotate(-3 284.6 122.8)"/><ellipse cx="284.4" cy="127.3" rx="0.8" ry="0.6" transform="rotate(-5 284.4 127.3)"/><ellipse cx="244.0" cy="117.8" rx="1.4" ry="1.0" transform="rotate(-19 244.0 117.8)"/><ellipse cx="236.6" cy="127.4" rx="1.3" ry="1.0" transform="rotate(-57 236.6 127.4)"/><ellipse cx="270.3" cy="128.8" rx="1.0" ry="1.0" transform="rotate(8 270.3 128.8)"/><ellipse cx="257.7" cy="123.1" rx="1.4" ry="1.0" transform="rotate(1 257.7 123.1)"/><ellipse cx="276.8" cy="146.8" rx="0.9" ry="1.0" transform="rotate(46 276.8 146.8)"/><ellipse cx="266.7" cy="126.6" rx="1.3" ry="1.0" transform="rotate(12 266.7 126.6)"/><ellipse cx="271.9" cy="132.9" rx="1.0" ry="0.8" transform="rotate(35 271.9 132.9)"/><ellipse cx="238.3" cy="126.4" rx="0.8" ry="0.7" transform="rotate(53 238.3 126.4)"/><ellipse cx="265.1" cy="128.5" rx="1.3" ry="0.8" transform="rotate(-60 265.1 128.5)"/><ellipse cx="279.8" cy="145.5" rx="1.2" ry="0.8" transform="rotate(44 279.8 145.5)"/><ellipse cx="253.2" cy="139.9" rx="1.4" ry="0.9" transform="rotate(3 253.2 139.9)"/><ellipse cx="269.8" cy="128.0" rx="1.1" ry="0.9" transform="rotate(46 269.8 128.0)"/><ellipse cx="270.4" cy="128.9" rx="1.1" ry="0.6" transform="rotate(-58 270.4 128.9)"/><ellipse cx="249.8" cy="119.5" rx="1.1" ry="0.7" transform="rotate(12 249.8 119.5)"/><ellipse cx="277.1" cy="144.7" rx="1.0" ry="0.9" transform="rotate(21 277.1 144.7)"/><ellipse cx="259.2" cy="126.4" rx="1.3" ry="1.0" transform="rotate(-52 259.2 126.4)"/><ellipse cx="265.9" cy="132.5" rx="0.9" ry="0.9" transform="rotate(16 265.9 132.5)"/><ellipse cx="408.5" cy="28.4" rx="1.3" ry="1.1" transform="rotate(42 408.5 28.4)"/><ellipse cx="378.5" cy="63.0" rx="1.4" ry="0.7" transform="rotate(30 378.5 63.0)"/><ellipse cx="399.1" cy="28.0" rx="1.2" ry="0.9" transform="rotate(23 399.1 28.0)"/><ellipse cx="346.0" cy="57.5" rx="0.9" ry="0.8" transform="rotate(-16 346.0 57.5)"/><ellipse cx="348.6" cy="-31.0" rx="1.5" ry="0.8" transform="rotate(-7 348.6 -31.0)"/><ellipse cx="357.9" cy="-7.2" rx="1.0" ry="0.9" transform="rotate(10 357.9 -7.2)"/><ellipse cx="372.3" cy="59.4" rx="1.0" ry="1.1" transform="rotate(32 372.3 59.4)"/><ellipse cx="358.6" cy="-15.0" rx="1.1" ry="0.8" transform="rotate(-31 358.6 -15.0)"/><ellipse cx="390.7" cy="-9.5" rx="1.2" ry="1.1" transform="rotate(53 390.7 -9.5)"/><ellipse cx="392.7" cy="-22.7" rx="0.9" ry="1.0" transform="rotate(44 392.7 -22.7)"/><ellipse cx="379.2" cy="62.2" rx="1.5" ry="1.0" transform="rotate(-45 379.2 62.2)"/><ellipse cx="366.7" cy="74.7" rx="1.3" ry="0.9" transform="rotate(-54 366.7 74.7)"/><ellipse cx="406.5" cy="-1.4" rx="1.4" ry="1.0" transform="rotate(0 406.5 -1.4)"/><ellipse cx="405.6" cy="84.7" rx="1.0" ry="1.0" transform="rotate(-60 405.6 84.7)"/><ellipse cx="406.8" cy="82.7" rx="1.5" ry="0.7" transform="rotate(41 406.8 82.7)"/><ellipse cx="351.1" cy="103.2" rx="1.0" ry="1.0" transform="rotate(-12 351.1 103.2)"/><ellipse cx="371.8" cy="25.3" rx="1.2" ry="0.8" transform="rotate(16 371.8 25.3)"/><ellipse cx="345.1" cy="97.3" rx="0.8" ry="1.1" transform="rotate(-11 345.1 97.3)"/><ellipse cx="392.2" cy="55.6" rx="1.0" ry="1.0" transform="rotate(55 392.2 55.6)"/><ellipse cx="339.9" cy="73.1" rx="0.8" ry="1.1" transform="rotate(-10 339.9 73.1)"/></g></g><text x="526.0" y="151.5" font-size="16" fill="#555" text-anchor="middle" stroke="#fff" stroke-width="2.5" stroke-opacity="0.7" paint-order="stroke">ヨーロッパ</text><text x="525.0" y="269.0" font-size="16" fill="#555" text-anchor="middle" stroke="#fff" stroke-width="2.5" stroke-opacity="0.7" paint-order="stroke">アフリカ</text><text x="363.0" y="317.0" font-size="16" fill="#555" text-anchor="middle" stroke="#fff" stroke-width="2.5" stroke-opacity="0.7" paint-order="stroke">南アメリカ</text><text x="790.0" y="331.0" font-size="16" fill="#555" text-anchor="middle" stroke="#fff" stroke-width="2.5" stroke-opacity="0.7" paint-order="stroke">オーストラリア</text><g fill-opacity="0.6" stroke-width="1.5" stroke-opacity="0.8" stroke-linejoin="round"><path d="M678.8 188.7L678.8 150.0A38.7 38.7 0 1 1 673.9 227.1Z" fill="#96d69a" stroke="#3f963f"/><path d="M678.8 188.7L673.9 227.1A38.7 38.7 0 0 1 662.3 153.7Z" fill="#c4dfba" stroke="#86a276"/><path d="M678.8 188.7L662.3 153.7A38.7 38.7 0 0 1 678.8 150.0Z" fill="#5f9b84" stroke="#2a6a4a"/><path d="M236.5 181.0L236.5 157.0A24.0 24.0 0 1 1 219.0 197.4Z" fill="#96d69a" stroke="#3f963f"/><path d="M236.5 181.0L219.0 197.4A24.0 24.0 0 0 1 218.0 165.7Z" fill="#5f9b84" stroke="#2a6a4a"/><path d="M236.5 181.0L218.0 165.7A24.0 24.0 0 0 1 236.5 157.0Z" fill="#c4dfba" stroke="#86a276"/><path d="M717.2 221.1L717.2 197.7A23.4 23.4 0 1 1 703.4 240.0Z" fill="#96d69a" stroke="#3f963f"/><path d="M717.2 221.1L703.4 240.0A23.4 23.4 0 0 1 693.8 221.1Z" fill="#c4dfba" stroke="#86a276"/><path d="M717.2 221.1L693.8 221.1A23.4 23.4 0 0 1 717.2 197.7Z" fill="#5f9b84" stroke="#2a6a4a"/><path d="M731.2 189.4L731.2 167.8A21.6 21.6 0 1 1 725.8 210.3Z" fill="#96d69a" stroke="#3f963f"/><path d="M731.2 189.4L725.8 210.3A21.6 21.6 0 0 1 720.8 170.5Z" fill="#c4dfba" stroke="#86a276"/><path d="M731.2 189.4L720.8 170.5A21.6 21.6 0 0 1 731.2 167.8Z" fill="#5f9b84" stroke="#2a6a4a"/><path d="M625.0 225.0L625.0 203.6A21.4 21.4 0 0 1 634.1 244.4Z" fill="#96d69a" stroke="#3f963f"/><path d="M625.0 225.0L634.1 244.4A21.4 21.4 0 0 1 603.6 223.7Z" fill="#c4dfba" stroke="#86a276"/><path d="M625.0 225.0L603.6 223.7A21.4 21.4 0 0 1 625.0 203.6Z" fill="#5f9b84" stroke="#2a6a4a"/><path d="M701.4 277.3L701.4 257.7A19.6 19.6 0 1 1 689.9 293.2Z" fill="#5f9b84" stroke="#2a6a4a"/><path d="M701.4 277.3L689.9 293.2A19.6 19.6 0 0 1 693.1 259.6Z" fill="#96d69a" stroke="#3f963f"/><path d="M701.4 277.3L693.1 259.6A19.6 19.6 0 0 1 701.4 257.7Z" fill="#c4dfba" stroke="#86a276"/><path d="M242.1 98.8L242.1 79.9A18.9 18.9 0 1 1 229.2 112.6Z" fill="#96d69a" stroke="#3f963f"/><path d="M242.1 98.8L229.2 112.6A18.9 18.9 0 0 1 225.5 89.7Z" fill="#5f9b84" stroke="#2a6a4a"/><path d="M242.1 98.8L225.5 89.7A18.9 18.9 0 0 1 242.1 79.9Z" fill="#c4dfba" stroke="#86a276"/><path d="M447.1 178.5L447.1 160.0A18.5 18.5 0 1 1 429.5 172.8Z" fill="#96d69a" stroke="#3f963f"/><path d="M447.1 178.5L429.5 172.8A18.5 18.5 0 0 1 447.1 160.0Z" fill="#5f9b84" stroke="#2a6a4a"/><path d="M484.4 111.4L484.4 98.4A13.0 13.0 0 1 1 476.8 121.9Z" fill="#5f9b84" stroke="#2a6a4a"/><path d="M484.4 111.4L476.8 121.9A13.0 13.0 0 0 1 484.4 98.4Z" fill="#96d69a" stroke="#3f963f"/><path d="M517.2 215.8L517.2 198.0A17.8 17.8 0 1 1 506.7 230.2Z" fill="#96d69a" stroke="#3f963f"/><path d="M517.2 215.8L506.7 230.2A17.8 17.8 0 0 1 509.6 199.7Z" fill="#c4dfba" stroke="#86a276"/><path d="M517.2 215.8L509.6 199.7A17.8 17.8 0 0 1 517.2 198.0Z" fill="#5f9b84" stroke="#2a6a4a"/><path d="M753.7 188.7L753.7 171.3A17.4 17.4 0 1 1 739.0 198.0Z" fill="#96d69a" stroke="#3f963f"/><path d="M753.7 188.7L739.0 198.0A17.4 17.4 0 0 1 746.3 173.0Z" fill="#5f9b84" stroke="#2a6a4a"/><path d="M753.7 188.7L746.3 173.0A17.4 17.4 0 0 1 753.7 171.3Z" fill="#c4dfba" stroke="#86a276"/><path d="M745.9 332.9L745.9 315.9A17.0 17.0 0 1 1 742.7 349.6Z" fill="#96d69a" stroke="#3f963f"/><path d="M745.9 332.9L742.7 349.6A17.0 17.0 0 0 1 731.0 324.7Z" fill="#c4dfba" stroke="#86a276"/><path d="M745.9 332.9L731.0 324.7A17.0 17.0 0 0 1 745.9 315.9Z" fill="#5f9b84" stroke="#2a6a4a"/><path d="M665.8 88.0L665.8 71.3A16.7 16.7 0 1 1 656.0 101.5Z" fill="#96d69a" stroke="#3f963f"/><path d="M665.8 88.0L656.0 101.5A16.7 16.7 0 0 1 651.2 80.0Z" fill="#c4dfba" stroke="#86a276"/><path d="M665.8 88.0L651.2 80.0A16.7 16.7 0 0 1 665.8 71.3Z" fill="#5f9b84" stroke="#2a6a4a"/><path d="M229.2 221.1L229.2 204.8A16.3 16.3 0 0 1 232.3 237.1Z" fill="#96d69a" stroke="#3f963f"/><path d="M229.2 221.1L232.3 237.1A16.3 16.3 0 0 1 213.2 218.0Z" fill="#c4dfba" stroke="#86a276"/><path d="M229.2 221.1L213.2 218.0A16.3 16.3 0 0 1 229.2 204.8Z" fill="#5f9b84" stroke="#2a6a4a"/><path d="M571.8 199.2L571.8 182.9A16.3 16.3 0 1 1 562.2 212.4Z" fill="#96d69a" stroke="#3f963f"/><path d="M571.8 199.2L562.2 212.4A16.3 16.3 0 0 1 561.4 186.6Z" fill="#c4dfba" stroke="#86a276"/><path d="M571.8 199.2L561.4 186.6A16.3 16.3 0 0 1 571.8 182.9Z" fill="#5f9b84" stroke="#2a6a4a"/><path d="M537.2 252.0L537.2 236.3A15.7 15.7 0 1 1 522.0 255.9Z" fill="#96d69a" stroke="#3f963f"/><path d="M537.2 252.0L522.0 255.9A15.7 15.7 0 0 1 537.2 236.3Z" fill="#5f9b84" stroke="#2a6a4a"/><path d="M717.2 236.6L717.2 221.1A15.5 15.5 0 1 1 709.7 250.2Z" fill="#96d69a" stroke="#3f963f"/><path d="M717.2 236.6L709.7 250.2A15.5 15.5 0 0 1 717.2 221.1Z" fill="#5f9b84" stroke="#2a6a4a"/><path d="M336.5 297.6L336.5 282.4A15.2 15.2 0 1 1 321.3 298.6Z" fill="#96d69a" stroke="#3f963f"/><path d="M336.5 297.6L321.3 298.6A15.2 15.2 0 0 1 333.7 282.7Z" fill="#c4dfba" stroke="#86a276"/><path d="M336.5 297.6L333.7 282.7A15.2 15.2 0 0 1 336.5 282.4Z" fill="#5f9b84" stroke="#2a6a4a"/><path d="M530.3 181.4L530.3 166.7A14.7 14.7 0 0 1 530.3 196.1Z" fill="#96d69a" stroke="#3f963f"/><path d="M530.3 181.4L530.3 196.1A14.7 14.7 0 0 1 517.4 174.3Z" fill="#c4dfba" stroke="#86a276"/><path d="M530.3 181.4L517.4 174.3A14.7 14.7 0 0 1 530.3 166.7Z" fill="#5f9b84" stroke="#2a6a4a"/><path d="M829.4 373.8L829.4 359.2A14.6 14.6 0 1 1 818.2 383.1Z" fill="#c4dfba" stroke="#86a276"/><path d="M829.4 373.8L818.2 383.1A14.6 14.6 0 0 1 824.0 360.2Z" fill="#5f9b84" stroke="#2a6a4a"/><path d="M829.4 373.8L824.0 360.2A14.6 14.6 0 0 1 829.4 359.2Z" fill="#96d69a" stroke="#3f963f"/><path d="M509.2 95.0L509.2 80.4A14.6 14.6 0 0 1 516.2 107.8Z" fill="#96d69a" stroke="#3f963f"/><path d="M509.2 95.0L516.2 107.8A14.6 14.6 0 0 1 495.1 91.4Z" fill="#5f9b84" stroke="#2a6a4a"/><path d="M509.2 95.0L495.1 91.4A14.6 14.6 0 0 1 509.2 80.4Z" fill="#c4dfba" stroke="#86a276"/><path d="M446.6 129.2L446.6 114.6A14.6 14.6 0 0 1 446.6 143.8Z" fill="#96d69a" stroke="#3f963f"/><path d="M446.6 129.2L446.6 143.8A14.6 14.6 0 0 1 446.6 114.6Z" fill="#c4dfba" stroke="#86a276"/><path d="M435.1 138.5L435.1 123.9A14.6 14.6 0 0 1 442.1 151.3Z" fill="#96d69a" stroke="#3f963f"/><path d="M435.1 138.5L442.1 151.3A14.6 14.6 0 0 1 421.5 133.1Z" fill="#c4dfba" stroke="#86a276"/><path d="M435.1 138.5L421.5 133.1A14.6 14.6 0 0 1 435.1 123.9Z" fill="#5f9b84" stroke="#2a6a4a"/><path d="M293.6 266.0L293.6 251.5A14.5 14.5 0 1 1 283.7 255.4Z" fill="#96d69a" stroke="#3f963f"/><path d="M293.6 266.0L283.7 255.4A14.5 14.5 0 0 1 293.6 251.5Z" fill="#c4dfba" stroke="#86a276"/><path d="M603.3 207.6L603.3 193.1A14.5 14.5 0 0 1 603.3 222.1Z" fill="#96d69a" stroke="#3f963f"/><path d="M603.3 207.6L603.3 222.1A14.5 14.5 0 0 1 591.6 199.1Z" fill="#c4dfba" stroke="#86a276"/><path d="M603.3 207.6L591.6 199.1A14.5 14.5 0 0 1 603.3 193.1Z" fill="#5f9b84" stroke="#2a6a4a"/><path d="M649.0 220.7L649.0 206.2A14.5 14.5 0 1 1 635.2 225.2Z" fill="#c4dfba" stroke="#86a276"/><path d="M649.0 220.7L635.2 225.2A14.5 14.5 0 0 1 649.0 206.2Z" fill="#96d69a" stroke="#3f963f"/><path d="M701.7 225.0L701.7 210.5A14.5 14.5 0 0 1 701.7 239.5Z" fill="#96d69a" stroke="#3f963f"/><path d="M701.7 225.0L701.7 239.5A14.5 14.5 0 0 1 687.2 225.0Z" fill="#5f9b84" stroke="#2a6a4a"/><path d="M701.7 225.0L687.2 225.0A14.5 14.5 0 0 1 701.7 210.5Z" fill="#c4dfba" stroke="#86a276"/><path d="M628.7 258.2L628.7 243.8A14.4 14.4 0 1 1 625.1 272.1Z" fill="#c4dfba" stroke="#86a276"/><path d="M628.7 258.2L625.1 272.1A14.4 14.4 0 0 1 628.7 243.8Z" fill="#96d69a" stroke="#3f963f"/><path d="M472.4 129.2L472.4 115.0A14.2 14.2 0 1 1 458.9 133.6Z" fill="#96d69a" stroke="#3f963f"/><path d="M472.4 129.2L458.9 133.6A14.2 14.2 0 0 1 472.4 115.0Z" fill="#5f9b84" stroke="#2a6a4a"/><path d="M435.1 179.9L435.1 165.7A14.2 14.2 0 1 1 420.9 179.9Z" fill="#96d69a" stroke="#3f963f"/><path d="M435.1 179.9L420.9 179.9A14.2 14.2 0 0 1 428.3 167.5Z" fill="#c4dfba" stroke="#86a276"/><path d="M435.1 179.9L428.3 167.5A14.2 14.2 0 0 1 435.1 165.7Z" fill="#5f9b84" stroke="#2a6a4a"/><circle cx="464.8" cy="163.0" r="14.0" fill="#96d69a" stroke="#3f963f"/><path d="M476.0 110.5L476.0 96.7A13.8 13.8 0 1 1 471.7 123.6Z" fill="#96d69a" stroke="#3f963f"/><path d="M476.0 110.5L471.7 123.6A13.8 13.8 0 0 1 468.6 98.8Z" fill="#c4dfba" stroke="#86a276"/><path d="M476.0 110.5L468.6 98.8A13.8 13.8 0 0 1 476.0 96.7Z" fill="#5f9b84" stroke="#2a6a4a"/><path d="M483.0 160.3L483.0 146.5A13.8 13.8 0 1 1 470.9 166.9Z" fill="#96d69a" stroke="#3f963f"/><path d="M483.0 160.3L470.9 166.9A13.8 13.8 0 0 1 483.0 146.5Z" fill="#c4dfba" stroke="#86a276"/><path d="M662.9 230.1L662.9 216.3A13.8 13.8 0 0 1 662.9 243.9Z" fill="#5f9b84" stroke="#2a6a4a"/><path d="M662.9 230.1L662.9 243.9A13.8 13.8 0 0 1 662.9 216.3Z" fill="#96d69a" stroke="#3f963f"/><path d="M636.0 210.5L636.0 196.8A13.7 13.7 0 1 1 631.8 223.5Z" fill="#96d69a" stroke="#3f963f"/><path d="M636.0 210.5L631.8 223.5A13.7 13.7 0 0 1 623.0 206.3Z" fill="#c4dfba" stroke="#86a276"/><path d="M636.0 210.5L623.0 206.3A13.7 13.7 0 0 1 636.0 196.8Z" fill="#5f9b84" stroke="#2a6a4a"/><path d="M485.3 150.5L485.3 137.0A13.5 13.5 0 1 1 477.4 161.4Z" fill="#96d69a" stroke="#3f963f"/><path d="M485.3 150.5L477.4 161.4A13.5 13.5 0 0 1 485.3 137.0Z" fill="#5f9b84" stroke="#2a6a4a"/><path d="M678.8 233.7L678.8 220.3A13.4 13.4 0 0 1 678.8 247.1Z" fill="#96d69a" stroke="#3f963f"/><path d="M678.8 233.7L678.8 247.1A13.4 13.4 0 0 1 678.8 220.3Z" fill="#5f9b84" stroke="#2a6a4a"/><path d="M678.8 272.3L678.8 258.9A13.4 13.4 0 0 1 678.8 285.7Z" fill="#c4dfba" stroke="#86a276"/><path d="M678.8 272.3L678.8 285.7A13.4 13.4 0 0 1 668.0 264.4Z" fill="#96d69a" stroke="#3f963f"/><path d="M678.8 272.3L668.0 264.4A13.4 13.4 0 0 1 678.8 258.9Z" fill="#5f9b84" stroke="#2a6a4a"/><circle cx="504.4" cy="130.0" r="13.3" fill="#96d69a" stroke="#3f963f"/><path d="M478.2 179.0L478.2 165.7A13.3 13.3 0 1 1 467.4 171.2Z" fill="#96d69a" stroke="#3f963f"/><path d="M478.2 179.0L467.4 171.2A13.3 13.3 0 0 1 478.2 165.7Z" fill="#c4dfba" stroke="#86a276"/><path d="M507.5 115.8L507.5 102.7A13.1 13.1 0 0 1 507.5 128.9Z" fill="#c4dfba" stroke="#86a276"/><path d="M507.5 115.8L507.5 128.9A13.1 13.1 0 0 1 494.4 115.8Z" fill="#5f9b84" stroke="#2a6a4a"/><path d="M507.5 115.8L494.4 115.8A13.1 13.1 0 0 1 507.5 102.7Z" fill="#96d69a" stroke="#3f963f"/><path d="M506.1 161.2L506.1 148.1A13.1 13.1 0 1 1 494.6 167.5Z" fill="#96d69a" stroke="#3f963f"/><path d="M506.1 161.2L494.6 167.5A13.1 13.1 0 0 1 506.1 148.1Z" fill="#5f9b84" stroke="#2a6a4a"/><path d="M549.7 220.8L549.7 207.7A13.1 13.1 0 1 1 537.2 216.8Z" fill="#c4dfba" stroke="#86a276"/><path d="M549.7 220.8L537.2 216.8A13.1 13.1 0 0 1 549.7 207.7Z" fill="#96d69a" stroke="#3f963f"/><path d="M554.5 317.0L554.5 303.9A13.1 13.1 0 1 1 546.8 327.6Z" fill="#c4dfba" stroke="#86a276"/><path d="M554.5 317.0L546.8 327.6A13.1 13.1 0 0 1 554.5 303.9Z" fill="#96d69a" stroke="#3f963f"/><path d="M279.7 277.9L279.7 264.9A13.0 13.0 0 0 1 279.7 290.9Z" fill="#5f9b84" stroke="#2a6a4a"/><path d="M279.7 277.9L279.7 290.9A13.0 13.0 0 0 1 279.7 264.9Z" fill="#96d69a" stroke="#3f963f"/><circle cx="517.2" cy="144.3" r="13.0" fill="#96d69a" stroke="#3f963f"/><path d="M443.5 158.5L443.5 145.5A13.0 13.0 0 1 1 435.9 169.0Z" fill="#5f9b84" stroke="#2a6a4a"/><path d="M443.5 158.5L435.9 169.0A13.0 13.0 0 0 1 443.5 145.5Z" fill="#96d69a" stroke="#3f963f"/><path d="M482.6 157.7L482.6 144.7A13.0 13.0 0 0 1 482.6 170.7Z" fill="#5f9b84" stroke="#2a6a4a"/><path d="M482.6 157.7L482.6 170.7A13.0 13.0 0 0 1 482.6 144.7Z" fill="#96d69a" stroke="#3f963f"/><path d="M495.0 154.0L495.0 141.0A13.0 13.0 0 1 1 483.6 160.3Z" fill="#96d69a" stroke="#3f963f"/><path d="M495.0 154.0L483.6 160.3A13.0 13.0 0 0 1 495.0 141.0Z" fill="#5f9b84" stroke="#2a6a4a"/><circle cx="679.3" cy="158.9" r="13.0" fill="#96d69a" stroke="#3f963f"/><path d="M681.0 246.8L681.0 233.8A13.0 13.0 0 0 1 681.0 259.8Z" fill="#96d69a" stroke="#3f963f"/><path d="M681.0 246.8L681.0 259.8A13.0 13.0 0 0 1 681.0 233.8Z" fill="#c4dfba" stroke="#86a276"/><path d="M671.6 264.3L671.6 251.3A13.0 13.0 0 1 1 659.2 268.3Z" fill="#c4dfba" stroke="#86a276"/><path d="M671.6 264.3L659.2 268.3A13.0 13.0 0 0 1 664.0 253.8Z" fill="#96d69a" stroke="#3f963f"/><path d="M671.6 264.3L664.0 253.8A13.0 13.0 0 0 1 671.6 251.3Z" fill="#5f9b84" stroke="#2a6a4a"/><circle cx="459.1" cy="211.1" r="12.9" fill="#96d69a" stroke="#3f963f"/><path d="M461.3 145.2L461.3 132.5A12.7 12.7 0 1 1 448.6 145.2Z" fill="#96d69a" stroke="#3f963f"/><path d="M461.3 145.2L448.6 145.2A12.7 12.7 0 0 1 461.3 132.5Z" fill="#5f9b84" stroke="#2a6a4a"/><path d="M533.5 203.4L533.5 190.8A12.6 12.6 0 0 1 533.5 216.0Z" fill="#96d69a" stroke="#3f963f"/><path d="M533.5 203.4L533.5 216.0A12.6 12.6 0 0 1 533.5 190.8Z" fill="#c4dfba" stroke="#86a276"/><path d="M577.1 228.1L577.1 215.5A12.6 12.6 0 0 1 577.1 240.7Z" fill="#96d69a" stroke="#3f963f"/><path d="M577.1 228.1L577.1 240.7A12.6 12.6 0 0 1 577.1 215.5Z" fill="#c4dfba" stroke="#86a276"/><circle cx="607.0" cy="183.5" r="12.6" fill="#96d69a" stroke="#3f963f"/><path d="M470.5 253.0L470.5 240.4A12.6 12.6 0 1 1 458.5 249.1Z" fill="#96d69a" stroke="#3f963f"/><path d="M470.5 253.0L458.5 249.1A12.6 12.6 0 0 1 470.5 240.4Z" fill="#c4dfba" stroke="#86a276"/><path d="M481.6 264.5L481.6 251.9A12.6 12.6 0 1 1 470.2 269.9Z" fill="#c4dfba" stroke="#86a276"/><path d="M481.6 264.5L470.2 269.9A12.6 12.6 0 0 1 481.6 251.9Z" fill="#96d69a" stroke="#3f963f"/><circle cx="507.3" cy="341.2" r="12.6" fill="#96d69a" stroke="#3f963f"/><circle cx="330.7" cy="350.9" r="12.4" fill="#c4dfba" stroke="#86a276"/><circle cx="296.8" cy="347.6" r="12.3" fill="#96d69a" stroke="#3f963f"/><path d="M521.0 145.0L521.0 133.0A12.0 12.0 0 1 1 509.0 145.0Z" fill="#c4dfba" stroke="#86a276"/><path d="M521.0 145.0L509.0 145.0A12.0 12.0 0 0 1 521.0 133.0Z" fill="#96d69a" stroke="#3f963f"/><path d="M493.3 184.3L493.3 172.3A12.0 12.0 0 1 1 481.9 180.6Z" fill="#96d69a" stroke="#3f963f"/><path d="M493.3 184.3L481.9 180.6A12.0 12.0 0 0 1 493.3 172.3Z" fill="#c4dfba" stroke="#86a276"/><path d="M537.7 194.0L537.7 182.0A12.0 12.0 0 0 1 537.7 206.0Z" fill="#96d69a" stroke="#3f963f"/><path d="M537.7 194.0L537.7 206.0A12.0 12.0 0 0 1 537.7 182.0Z" fill="#c4dfba" stroke="#86a276"/><circle cx="649.8" cy="211.2" r="12.0" fill="#c4dfba" stroke="#86a276"/><circle cx="664.8" cy="245.8" r="12.0" fill="#5f9b84" stroke="#2a6a4a"/><circle cx="692.7" cy="248.3" r="12.0" fill="#96d69a" stroke="#3f963f"/><path d="M695.6 267.2L695.6 255.2A12.0 12.0 0 1 1 688.5 276.9Z" fill="#96d69a" stroke="#3f963f"/><path d="M695.6 267.2L688.5 276.9A12.0 12.0 0 0 1 695.6 255.2Z" fill="#c4dfba" stroke="#86a276"/><circle cx="489.9" cy="327.0" r="12.0" fill="#96d69a" stroke="#3f963f"/><circle cx="308.5" cy="257.2" r="11.8" fill="#96d69a" stroke="#3f963f"/><circle cx="615.9" cy="175.1" r="11.8" fill="#96d69a" stroke="#3f963f"/><circle cx="325.9" cy="327.0" r="11.6" fill="#96d69a" stroke="#3f963f"/><circle cx="311.0" cy="356.3" r="11.6" fill="#5f9b84" stroke="#2a6a4a"/><circle cx="503.0" cy="184.3" r="11.5" fill="#5f9b84" stroke="#2a6a4a"/><circle cx="536.1" cy="271.9" r="11.5" fill="#5f9b84" stroke="#2a6a4a"/><circle cx="530.9" cy="289.2" r="11.5" fill="#96d69a" stroke="#3f963f"/><circle cx="512.5" cy="307.1" r="11.5" fill="#96d69a" stroke="#3f963f"/><circle cx="528.8" cy="319.1" r="11.5" fill="#96d69a" stroke="#3f963f"/><circle cx="578.1" cy="320.2" r="11.5" fill="#96d69a" stroke="#3f963f"/><circle cx="506.2" cy="326.5" r="11.5" fill="#96d69a" stroke="#3f963f"/><circle cx="483.5" cy="191.4" r="11.3" fill="#96d69a" stroke="#3f963f"/><circle cx="472.4" cy="196.7" r="11.1" fill="#5f9b84" stroke="#2a6a4a"/><circle cx="454.3" cy="254.6" r="11.0" fill="#96d69a" stroke="#3f963f"/><circle cx="525.6" cy="204.5" r="10.5" fill="#96d69a" stroke="#3f963f"/><circle cx="553.4" cy="197.1" r="10.0" fill="#96d69a" stroke="#3f963f"/><path d="M450.0 256.7L450.0 244.1A12.6 12.6 0 1 1 439.0 262.8Z" fill="#c4dfba" stroke="#86a276"/><path d="M450.0 256.7L439.0 262.8A12.6 12.6 0 0 1 450.0 244.1Z" fill="#5f9b84" stroke="#2a6a4a"/><path d="M523.0 271.4L523.0 258.8A12.6 12.6 0 1 1 510.4 271.4Z" fill="#c4dfba" stroke="#86a276"/><path d="M523.0 271.4L510.4 271.4A12.6 12.6 0 0 1 523.0 258.8Z" fill="#96d69a" stroke="#3f963f"/><path d="M526.7 303.9L526.7 291.6A12.3 12.3 0 1 1 515.9 309.8Z" fill="#5f9b84" stroke="#2a6a4a"/><path d="M526.7 303.9L515.9 309.8A12.3 12.3 0 0 1 526.7 291.6Z" fill="#96d69a" stroke="#3f963f"/></g><text x="255.0" y="142.0" font-size="16" fill="#555" text-anchor="middle" stroke="#fff" stroke-width="2.5" stroke-opacity="0.7" paint-order="stroke">北アメリカ</text><text x="694.0" y="135.0" font-size="16" fill="#555" text-anchor="middle" stroke="#fff" stroke-width="2.5" stroke-opacity="0.7" paint-order="stroke">アジア</text><text x="105.0" y="208.0" font-size="16" fill="#4f63b5" text-anchor="middle" stroke="#fff" stroke-width="2.5" stroke-opacity="0.7" paint-order="stroke">太平洋</text><text x="376.0" y="212.0" font-size="16" fill="#4f63b5" text-anchor="middle" stroke="#fff" stroke-width="2.5" stroke-opacity="0.7" paint-order="stroke">大西洋</text><text x="641.0" y="330.0" font-size="16" fill="#4f63b5" text-anchor="middle" stroke="#fff" stroke-width="2.5" stroke-opacity="0.7" paint-order="stroke">インド洋</text><rect x="8" y="432" width="7" height="7" fill="#de6f3a"/><rect x="15.9" y="432" width="7" height="7" fill="#9bbf4a"/><rect x="8" y="439.9" width="7" height="7" fill="#5eaee6"/><rect x="15.9" y="439.9" width="7" height="7" fill="#f0c23c"/><text x="26.5" y="444" font-size="13.5" fill="#737373" letter-spacing="-0.45">Microsoft Bing</text><text x="638" y="447" font-size="14" fill="#000" stroke="#fff" stroke-width="2.5" stroke-opacity="0.75" paint-order="stroke" letter-spacing="-0.15">© 2025 Microsoft Corporation</text><text x="829" y="448" font-size="14" fill="#3f4ea6" text-decoration="underline" letter-spacing="-0.45">Terms</text><circle cx="828.3" cy="36.8" r="30" fill="#fff" fill-opacity="0.55"/><circle cx="828.3" cy="36.8" r="24.5" fill="#fff" stroke="#000" stroke-width="2.2"/><path d="M814.8 36.8h27M828.3 23.3v27" stroke="#3c3c3c" stroke-width="3" fill="none"/><circle cx="828.3" cy="122.7" r="30" fill="#fff" fill-opacity="0.55"/><circle cx="828.3" cy="122.7" r="24.5" fill="#fff" stroke="#c4c4c4" stroke-width="2.2"/><path d="M814.8 122.7h27" stroke="#c4c4c4" stroke-width="3" fill="none"/><circle cx="828.3" cy="208.3" r="30" fill="#fff" fill-opacity="0.55"/><circle cx="828.3" cy="208.3" r="24.5" fill="#fff" stroke="#000" stroke-width="2.2"/><path d="M826.8 219.8h-14.5v-21h31v13" stroke="#3c3c3c" stroke-width="2.5" fill="none"/><path d="M830.8 203.8v17.5l4.2-3.6l3.3 7l3-1.4l-3.3-6.9l5.6-0.5z" fill="#fff" stroke="#3c3c3c" stroke-width="1.9" stroke-linejoin="round"/></svg>
</div>
<div class="panel" style="left:1355px;top:76px;width:617px;height:560px">
<div class="hd" style="height:46px"><span style="font-size:28.7px;line-height:46px;top:2px;left:6px">外国人研究者受入数</span></div>
<div class="dot" style="left:10.5px;top:62px;width:15px;height:15px;background:#5f9b84"></div><div class="lg" style="left:29.0px;top:55px;font-size:20px;line-height:28px">短期</div><div class="dot" style="left:79.8px;top:62px;width:15px;height:15px;background:#96d69a"></div><div class="lg" style="left:98.3px;top:55px;font-size:20px;line-height:28px">中期</div><div class="dot" style="left:149.1px;top:62px;width:15px;height:15px;background:#c4dfba"></div><div class="lg" style="left:167.6px;top:55px;font-size:20px;line-height:28px">長期</div><svg class="abs" style="left:0;top:0" width="617" height="560" viewBox="1356 77 617 560"><path d="M1409 592.1H1966" stroke="#c8c6c4" stroke-width="1.5" stroke-dasharray="1.5 6.5"/><text x="1394.5" y="598.4" font-size="17.5" fill="#605e5c" text-anchor="end">0</text><path d="M1409 497.9H1966" stroke="#c8c6c4" stroke-width="1.5" stroke-dasharray="1.5 6.5"/><text x="1394.5" y="504.2" font-size="17.5" fill="#605e5c" text-anchor="end">200</text><path d="M1409 403.7H1966" stroke="#c8c6c4" stroke-width="1.5" stroke-dasharray="1.5 6.5"/><text x="1394.5" y="410.0" font-size="17.5" fill="#605e5c" text-anchor="end">400</text><path d="M1409 309.6H1966" stroke="#c8c6c4" stroke-width="1.5" stroke-dasharray="1.5 6.5"/><text x="1394.5" y="315.9" font-size="17.5" fill="#605e5c" text-anchor="end">600</text><path d="M1409 215.4H1966" stroke="#c8c6c4" stroke-width="1.5" stroke-dasharray="1.5 6.5"/><text x="1394.5" y="221.7" font-size="17.5" fill="#605e5c" text-anchor="end">800</text><path d="M1443.0 187V592" stroke="#c8c6c4" stroke-width="1.5" stroke-dasharray="1.5 6.5"/><text x="1443.0" y="617" font-size="17.5" fill="#605e5c" text-anchor="middle">2018</text><path d="M1606.5 187V592" stroke="#c8c6c4" stroke-width="1.5" stroke-dasharray="1.5 6.5"/><text x="1606.5" y="617" font-size="17.5" fill="#605e5c" text-anchor="middle">2020</text><path d="M1770.0 187V592" stroke="#c8c6c4" stroke-width="1.5" stroke-dasharray="1.5 6.5"/><text x="1770.0" y="617" font-size="17.5" fill="#605e5c" text-anchor="middle">2022</text><path d="M1933.5 187V592" stroke="#c8c6c4" stroke-width="1.5" stroke-dasharray="1.5 6.5"/><text x="1933.5" y="617" font-size="17.5" fill="#605e5c" text-anchor="middle">2024</text><rect x="1410.3" y="513.9" width="65.3" height="78.5" fill="#5f9b84"/><text x="1443.0" y="559.3" font-size="17.5" fill="#fff" text-anchor="middle">166</text><rect x="1410.3" y="303.0" width="65.3" height="211.3" fill="#96d69a"/><text x="1443.0" y="414.7" font-size="17.5" fill="#fff" text-anchor="middle">448</text><rect x="1410.3" y="228.1" width="65.3" height="75.2" fill="#c4dfba"/><text x="1443.0" y="271.8" font-size="17.5" fill="#fff" text-anchor="middle">159</text><text x="1443.0" y="215.6" font-size="17.5" fill="#605e5c" text-anchor="middle">773</text><rect x="1492.0" y="527.6" width="65.3" height="64.8" fill="#5f9b84"/><text x="1524.7" y="566.1" font-size="17.5" fill="#fff" text-anchor="middle">137</text><rect x="1492.0" y="353.4" width="65.3" height="174.5" fill="#96d69a"/><text x="1524.7" y="446.8" font-size="17.5" fill="#fff" text-anchor="middle">370</text><rect x="1492.0" y="255.9" width="65.3" height="97.8" fill="#c4dfba"/><text x="1524.7" y="310.9" font-size="17.5" fill="#fff" text-anchor="middle">207</text><text x="1524.7" y="243.4" font-size="17.5" fill="#605e5c" text-anchor="middle">714</text><rect x="1573.8" y="590.2" width="65.3" height="2.2" fill="#5f9b84"/><rect x="1573.8" y="536.1" width="65.3" height="54.5" fill="#96d69a"/><text x="1606.5" y="569.4" font-size="17.5" fill="#fff" text-anchor="middle">115</text><rect x="1573.8" y="459.3" width="65.3" height="77.1" fill="#c4dfba"/><text x="1606.5" y="504.0" font-size="17.5" fill="#fff" text-anchor="middle">163</text><text x="1606.5" y="446.8" font-size="17.5" fill="#605e5c" text-anchor="middle">282</text><rect x="1655.5" y="590.7" width="65.3" height="1.7" fill="#5f9b84"/><rect x="1655.5" y="544.1" width="65.3" height="46.9" fill="#96d69a"/><text x="1688.2" y="573.7" font-size="17.5" fill="#fff" text-anchor="middle">99</text><rect x="1655.5" y="499.8" width="65.3" height="44.6" fill="#c4dfba"/><text x="1688.2" y="528.2" font-size="17.5" fill="#fff" text-anchor="middle">94</text><text x="1688.2" y="487.3" font-size="17.5" fill="#605e5c" text-anchor="middle">196</text><rect x="1737.3" y="522.9" width="65.3" height="69.5" fill="#5f9b84"/><text x="1770.0" y="563.8" font-size="17.5" fill="#fff" text-anchor="middle">147</text><rect x="1737.3" y="327.5" width="65.3" height="195.7" fill="#96d69a"/><text x="1770.0" y="431.5" font-size="17.5" fill="#fff" text-anchor="middle">415</text><rect x="1737.3" y="261.5" width="65.3" height="66.2" fill="#c4dfba"/><text x="1770.0" y="300.8" font-size="17.5" fill="#fff" text-anchor="middle">140</text><text x="1770.0" y="249.0" font-size="17.5" fill="#605e5c" text-anchor="middle">702</text><rect x="1819.0" y="526.2" width="65.3" height="66.2" fill="#5f9b84"/><text x="1851.7" y="565.4" font-size="17.5" fill="#fff" text-anchor="middle">140</text><rect x="1819.0" y="314.7" width="65.3" height="211.7" fill="#96d69a"/><text x="1851.7" y="426.8" font-size="17.5" fill="#fff" text-anchor="middle">449</text><rect x="1819.0" y="222.9" width="65.3" height="92.1" fill="#c4dfba"/><text x="1851.7" y="275.1" font-size="17.5" fill="#fff" text-anchor="middle">195</text><text x="1851.7" y="210.4" font-size="17.5" fill="#605e5c" text-anchor="middle">784</text><rect x="1900.8" y="528.5" width="65.3" height="63.9" fill="#5f9b84"/><text x="1933.5" y="566.6" font-size="17.5" fill="#fff" text-anchor="middle">135</text><rect x="1900.8" y="302.0" width="65.3" height="226.8" fill="#96d69a"/><text x="1933.5" y="421.6" font-size="17.5" fill="#fff" text-anchor="middle">481</text><rect x="1900.8" y="215.9" width="65.3" height="86.5" fill="#c4dfba"/><text x="1933.5" y="265.2" font-size="17.5" fill="#fff" text-anchor="middle">183</text><text x="1933.5" y="203.4" font-size="17.5" fill="#605e5c" text-anchor="middle">799</text></svg>
</div>
<div class="panel" style="left:427px;top:646px;width:764px;height:424px">
<div class="hd" style="height:46px"><span style="font-size:28.7px;line-height:46px;top:2px;left:6px">目的別外国人研究者受入数</span></div>
<div class="dot" style="left:9.5px;top:138.5px;width:15px;height:15px;background:#dbe0d6"></div><div class="lg" style="left:28.0px;top:133.5px;font-size:16px;line-height:24px">研究</div><div class="dot" style="left:9.5px;top:173.3px;width:15px;height:15px;background:#c4dfba"></div><div class="lg" style="left:28.0px;top:168.3px;font-size:16px;line-height:24px">研究指導等</div><div class="dot" style="left:9.5px;top:208.1px;width:15px;height:15px;background:#aadda5"></div><div class="lg" style="left:28.0px;top:203.1px;font-size:16px;line-height:24px">調査・フィールドワーク</div><div class="dot" style="left:9.5px;top:242.9px;width:15px;height:15px;background:#96d69a"></div><div class="lg" style="left:28.0px;top:237.9px;font-size:16px;line-height:24px">研修</div><div class="dot" style="left:9.5px;top:277.7px;width:15px;height:15px;background:#7cb98f"></div><div class="lg" style="left:28.0px;top:272.7px;font-size:16px;line-height:24px">学会・シンポジウム</div><div class="dot" style="left:9.5px;top:312.5px;width:15px;height:15px;background:#5f9b84"></div><div class="lg" style="left:28.0px;top:307.5px;font-size:16px;line-height:24px">その他</div><svg class="abs" style="left:0;top:0" width="762" height="422" viewBox="428 647 762 422"><path d="M916.8 878.3L916.8 742.3A136.0 136.0 0 1 1 810.3 793.7Z" fill="#dbe0d6"/><path d="M916.8 878.3L810.3 793.7A136.0 136.0 0 0 1 814.7 788.4Z" fill="#c4dfba"/><path d="M916.8 878.3L814.7 788.4A136.0 136.0 0 0 1 816.6 786.3Z" fill="#aadda5"/><path d="M916.8 878.3L816.6 786.3A136.0 136.0 0 0 1 818.4 784.4Z" fill="#96d69a"/><path d="M916.8 878.3L818.4 784.4A136.0 136.0 0 0 1 820.2 782.5Z" fill="#7cb98f"/><path d="M916.8 878.3L820.2 782.5A136.0 136.0 0 0 1 916.8 742.3Z" fill="#5f9b84"/><g fill="none" stroke="#a0a0a0" stroke-width="1.5"><path d="M839 738.5H857L863 749"/><path d="M781 779.5H800L809.5 790.5"/><path d="M977.5 1004.5L983.5 1017H1001"/></g><g font-size="16" fill="#605e5c" transform="translate(0 0.8)"><text x="833" y="743" text-anchor="end">その他 534 (12.6%)</text><text x="775" y="775.5" text-anchor="end">研究指導等</text><text x="775" y="797" text-anchor="end">34 (0.8%)</text><text x="1008" y="1023">研究 3641 (85.7%)</text></g></svg>
</div>
<div class="panel" style="left:1201px;top:646px;width:773px;height:424px">
<div class="hd" style="height:46px"><span style="font-size:28.7px;line-height:46px;top:2px;left:6px">地域別外国人研究者受入数</span></div>
<div class="dot" style="left:9.5px;top:121.5px;width:15px;height:15px;background:#dbe0d6"></div><div class="lg" style="left:28.0px;top:116.5px;font-size:16px;line-height:24px">アジア</div><div class="dot" style="left:9.5px;top:156.3px;width:15px;height:15px;background:#c4dfba"></div><div class="lg" style="left:28.0px;top:151.3px;font-size:16px;line-height:24px">欧州</div><div class="dot" style="left:9.5px;top:191.1px;width:15px;height:15px;background:#aadda5"></div><div class="lg" style="left:28.0px;top:186.1px;font-size:16px;line-height:24px">北米</div><div class="dot" style="left:9.5px;top:225.9px;width:15px;height:15px;background:#96d69a"></div><div class="lg" style="left:28.0px;top:220.9px;font-size:16px;line-height:24px">アフリカ</div><div class="dot" style="left:9.5px;top:260.7px;width:15px;height:15px;background:#7cb98f"></div><div class="lg" style="left:28.0px;top:255.7px;font-size:16px;line-height:24px">中東</div><div class="dot" style="left:9.5px;top:295.5px;width:15px;height:15px;background:#5f9b84"></div><div class="lg" style="left:28.0px;top:290.5px;font-size:16px;line-height:24px">中南米</div><div class="dot" style="left:9.5px;top:330.3px;width:15px;height:15px;background:#3f7f7a"></div><div class="lg" style="left:28.0px;top:325.3px;font-size:16px;line-height:24px">大洋州</div><svg class="abs" style="left:0;top:0" width="771" height="422" viewBox="1202 647 771 422"><path d="M1638.0 877.8L1638.0 736.8A141.0 141.0 0 1 1 1600.0 1013.6Z" fill="#dbe0d6"/><path d="M1638.0 877.8L1600.0 1013.6A141.0 141.0 0 0 1 1517.1 805.3Z" fill="#c4dfba"/><path d="M1638.0 877.8L1517.1 805.3A141.0 141.0 0 0 1 1563.2 758.3Z" fill="#aadda5"/><path d="M1638.0 877.8L1563.2 758.3A141.0 141.0 0 0 1 1591.0 744.9Z" fill="#96d69a"/><path d="M1638.0 877.8L1591.0 744.9A141.0 141.0 0 0 1 1608.6 739.9Z" fill="#7cb98f"/><path d="M1638.0 877.8L1608.6 739.9A141.0 141.0 0 0 1 1625.5 737.4Z" fill="#5f9b84"/><path d="M1638.0 877.8L1625.5 737.4A141.0 141.0 0 0 1 1638.0 736.8Z" fill="#3f7f7a"/><g fill="none" stroke="#a0a0a0" stroke-width="1.5"><path d="M1550 736.5H1568L1575 748"/><path d="M1505 767.5H1524L1535 777.5"/><path d="M1513 996.5H1531L1541 985.5"/><path d="M1717 999.5L1725 1011.5H1743"/></g><g font-size="16" fill="#605e5c" transform="translate(0 0.8)"><text x="1544" y="741.5" text-anchor="end">アフリカ 148 (3.5%)</text><text x="1499" y="773.5" text-anchor="end">北米 319 (7.5%)</text><text x="1507" y="1002.5" text-anchor="end">欧州 1243 (29.2%)</text><text x="1751" y="1017.5">アジア 2309 (54.3%)</text></g></svg>
</div>
<div class="abs" style="left:435.5px;top:1072px;font-size:16.35px;line-height:24px;color:#252423;white-space:nowrap">※受入期間は30日以下を短期、31日以上365日以下を中期、366日以上を長期として計上。</div>
<div class="abs" style="left:2px;top:1112px;width:2048px;height:47px;background:#f5f5f5;border-top:2px solid #dedede;box-sizing:border-box"></div>
<div class="abs" style="left:2px;top:1158px;width:2048px;height:74px;background:#eaeaea;border-top:2px solid #c8c8c8;box-sizing:border-box"></div>
<svg class="abs" style="left:1600px;top:1112px" width="450" height="46" viewBox="1600 1112 450 46"><rect x="1627" y="1134.5" width="8" height="2.4" fill="#605e5c"/><path d="M1645 1136.5H1845" stroke="#605e5c" stroke-width="1.6"/><rect x="1715" y="1126" width="8" height="22" fill="#605e5c"/><path d="M1745 1132V1142" stroke="#605e5c" stroke-width="1.6"/><path d="M1856 1136.5H1871M1863.5 1129V1144" stroke="#605e5c" stroke-width="2.6"/><text x="1898" y="1145" font-size="23" fill="#605e5c">77%</text><rect x="1995" y="1128" width="26" height="18" rx="3" fill="none" stroke="#605e5c" stroke-width="1.8"/><path d="M2000 1135.5V1132.5H2004M2012 1132.5H2016V1135.5M2016 1138.5V1141.5H2012M2004 1141.5H2000V1138.5" fill="none" stroke="#605e5c" stroke-width="1.6"/></svg>
<div class="abs" style="left:28px;top:1182px;font-size:28px;line-height:36px;letter-spacing:0.3px;color:#2f6a62;text-decoration:underline;text-decoration-thickness:2px;white-space:nowrap">Microsoft Power BI</div>
<svg class="abs" style="left:970px;top:1170px" width="220" height="56" viewBox="970 1170 220 56"><path d="M998 1188L987.5 1198L998 1208" fill="none" stroke="#c0c0c0" stroke-width="1.8"/><path d="M1139 1188L1150 1198L1139 1208" fill="none" stroke="#111" stroke-width="1.8"/><text x="1067.5" y="1209" font-size="28.5" fill="#000" stroke="#000" stroke-width="0.55" text-anchor="middle">1 / 2</text></svg>
<svg class="abs" style="left:1900px;top:1175px" width="140" height="50" viewBox="1900 1175 140 50"><path d="M1927 1190.5H1924.5Q1918.5 1190.5 1918.5 1196.5V1204Q1918.5 1210 1924.5 1210H1934Q1940 1210 1940 1204V1203" fill="none" stroke="#000" stroke-width="2"/><path d="M1924 1203.5Q1925.5 1195 1934.5 1195V1190.5L1943.5 1197L1934.5 1203.5V1199.5Q1928 1199.5 1924 1203.5Z" fill="none" stroke="#000" stroke-width="1.9" stroke-linejoin="round"/><rect x="2003.5" y="1187.5" width="18" height="18" rx="3.5" fill="none" stroke="#2a22e0" stroke-width="1.7"/><path d="M2000.5 1192V1204Q2000.5 1209 2005.5 1209H2017" fill="none" stroke="#2a22e0" stroke-width="1.7"/><path d="M2009 1200.5L2016.5 1193M2011 1192.5H2017V1198.5" fill="none" stroke="#2a22e0" stroke-width="1.7"/></svg>
</body></html>
